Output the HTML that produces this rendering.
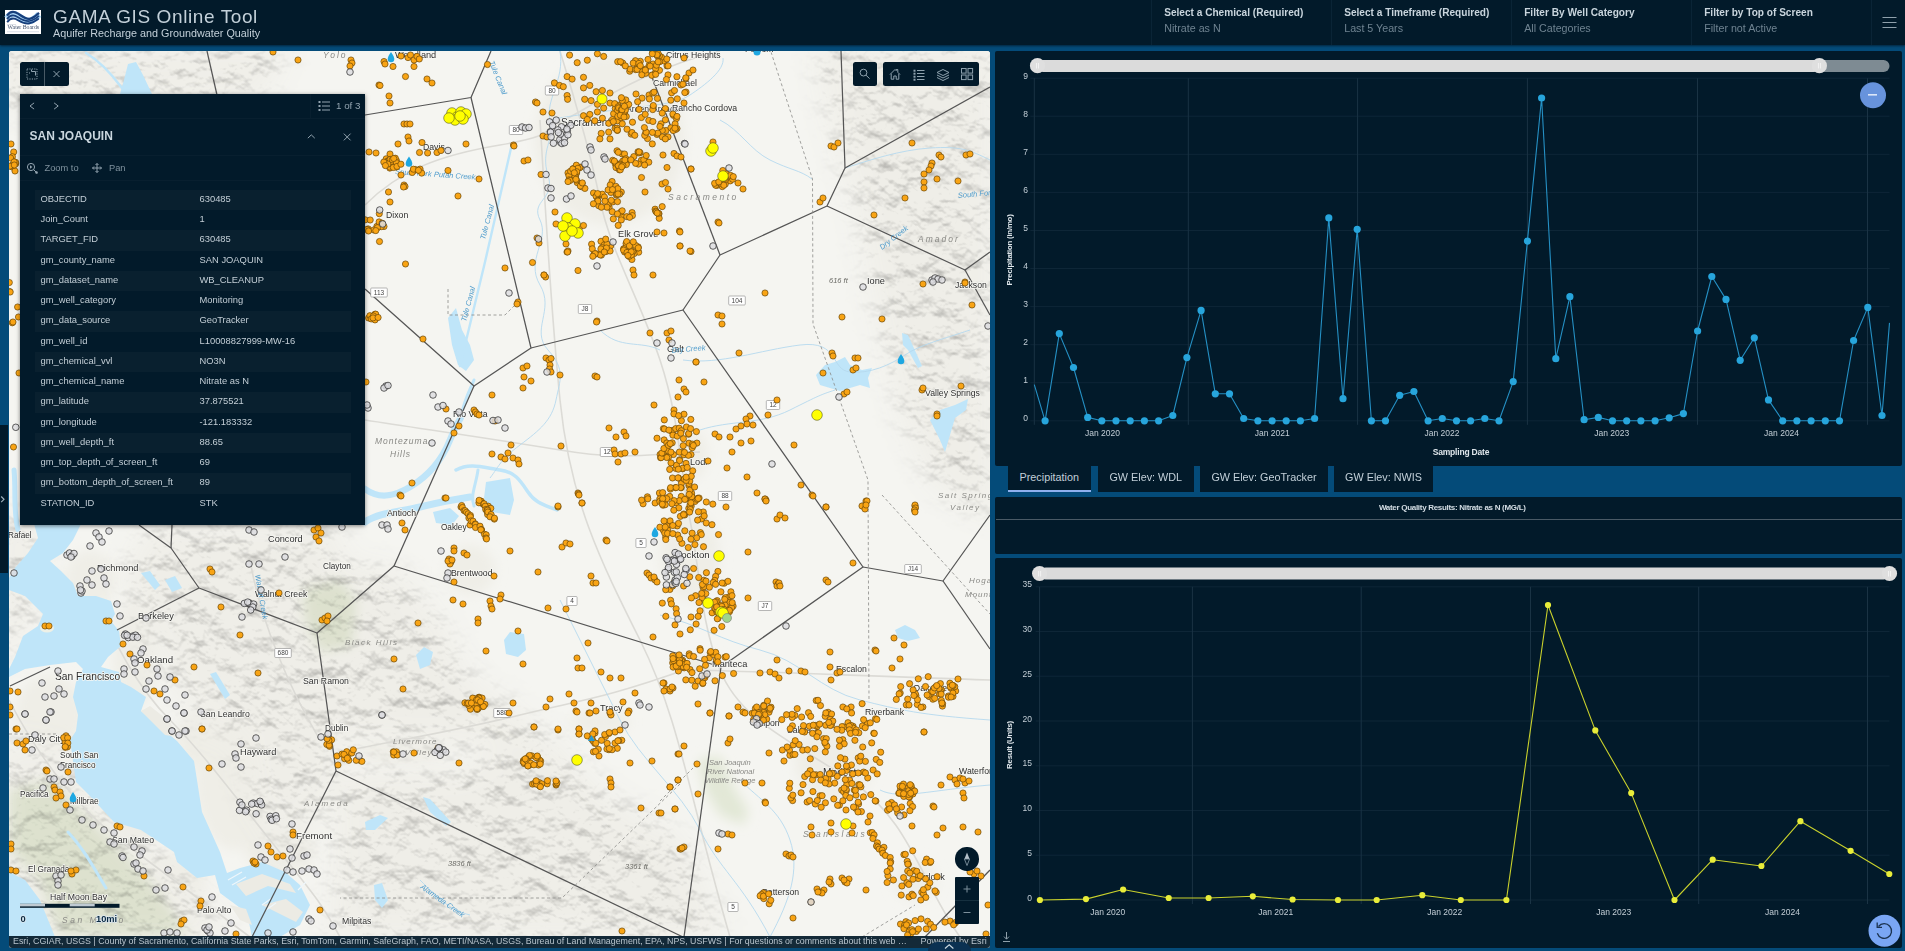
<!DOCTYPE html><html><head><meta charset="utf-8"><title>GAMA GIS Online Tool</title><style>
*{box-sizing:border-box;margin:0;padding:0}
html,body{width:1905px;height:951px;overflow:hidden;background:#044b79;font-family:"Liberation Sans",sans-serif;}
.abs{position:absolute}
#hdr{position:absolute;left:0;top:0;width:1905px;height:45px;background:#021a2a;box-shadow:0 1px 2px rgba(0,10,20,.6)}
#title{position:absolute;left:53px;top:4.5px;font-size:19px;letter-spacing:.6px;color:#c3d0d9;white-space:nowrap;line-height:24px}
#sub{position:absolute;left:53px;top:26px;font-size:10.8px;color:#c3d0d9;white-space:nowrap;line-height:14px}
.flt{position:absolute;top:0;height:45px;width:180px;border-left:1px solid #0a2436}
.flt b{position:absolute;left:12.2px;top:6px;font-size:10.1px;color:#c9d5dd;white-space:nowrap;line-height:13px}
.flt span{position:absolute;left:12.2px;top:22px;font-size:10.7px;color:#6f8391;white-space:nowrap;line-height:13px}
.panel{position:absolute;background:#021a2a;border-radius:2px}
.tab{position:absolute;top:466px;height:26px;background:#021a2a;color:#c3d0d9;font-size:10.8px;line-height:23px;text-align:center;white-space:nowrap}
#popup{position:absolute;left:20px;top:94px;width:345px;height:431px;background:#021a2a;box-shadow:0 1px 4px rgba(0,0,0,.5)}
#popup .row{position:absolute;left:15px;width:316px;height:20.25px;font-size:9.4px;color:#c3ced6;line-height:18.5px;white-space:nowrap}
#popup .row.o{background:#09202f}
#popup .row i{font-style:normal;position:absolute;left:5.5px}
#popup .row u{text-decoration:none;position:absolute;left:164.5px}
.mbtn{position:absolute;background:#021a2a;border-radius:2.5px}
svg{position:absolute;left:0;top:0;overflow:visible}
</style></head><body><div id="hdr"><svg width="46" height="46" viewBox="0 0 46 46"><rect x="5" y="10" width="36" height="24" fill="#fff"/>
<g fill="none" stroke-linecap="butt"><path d="M7.2 18.3C10 13.3 14 13 18 15.8S25.5 21.6 29.5 21S36 17.5 39 14.5" stroke="#a9d6f7" stroke-width="6.5"/>
<path d="M7 15.6C10 11.2 14 11 18 13.6S25.5 19.3 29.5 18.8S36 15.5 39 12.8" stroke="#173f7c" stroke-width="2.3"/>
<path d="M7 19.2C10 14.8 14 14.6 18 17.2S25.5 21.5 29.5 21S36 18.3 39 15.8" stroke="#173f7c" stroke-width="1.7"/>
<path d="M7.2 22.2C10 18 14 17.7 18 20.2S25.5 24 29.5 23.3S36 20.5 38.8 18.5" stroke="#173f7c" stroke-width="1.9"/></g>
<text x="7.6" y="29.3" font-size="5.8" font-family="Liberation Serif,serif" fill="#3c4d69" textLength="31.5" lengthAdjust="spacingAndGlyphs">Water Boards</text>
<rect x="7" y="31.4" width="32" height=".8" fill="#cfd6e2"/><rect x="7" y="24" width="9" height=".6" fill="#c5ccd8"/></svg><div id="title">GAMA GIS Online Tool</div><div id="sub">Aquifer Recharge and Groundwater Quality</div><div class="flt" style="left:1151px"><b>Select a Chemical (Required)</b><span>Nitrate as N</span></div><div class="flt" style="left:1331px"><b>Select a Timeframe (Required)</b><span>Last 5 Years</span></div><div class="flt" style="left:1511px"><b>Filter By Well Category</b><span>All Categories</span></div><div class="flt" style="left:1691px"><b>Filter by Top of Screen</b><span>Filter not Active</span></div><div class="flt" style="left:1871px;width:34px"></div><svg width="1905" height="46"><path d="M1882.5 17.5h14M1882.5 22.5h14M1882.5 27.5h14" stroke="#8fa0ab" stroke-width="1"/></svg></div><div class="abs" style="left:9px;top:51px;width:981px;height:896.5px;overflow:hidden;border-radius:3px;background:#f5f5f1"><svg width="981" height="896.5" viewBox="9 51 981 896.5" font-family="Liberation Sans, sans-serif"><defs><filter id="hs" x="0" y="0" width="100%" height="100%" color-interpolation-filters="sRGB"><feTurbulence type="fractalNoise" baseFrequency="0.04 0.05" numOctaves="4" seed="5" result="n"/><feDiffuseLighting in="n" surfaceScale="5.5" diffuseConstant="1.49" lighting-color="#fff"><feDistantLight azimuth="225" elevation="42"/></feDiffuseLighting></filter><filter id="bl" x="-20%" y="-20%" width="140%" height="140%"><feGaussianBlur stdDeviation="14"/></filter><filter id="bl2" x="-20%" y="-20%" width="140%" height="140%"><feGaussianBlur stdDeviation="6"/></filter><mask id="hm" maskUnits="userSpaceOnUse" x="9" y="51" width="981" height="897"><rect x="9" y="51" width="981" height="897" fill="#000"/><g filter="url(#bl)" fill="#fff"><polygon points="340,778 380,768 460,772 500,745 520,715 560,745 600,790 640,815 670,840 700,880 720,940 330,940 336,790" fill="#fff"/><polygon points="150,525 340,525 340,735 210,735 170,680 135,620 125,570" fill="#fff"/><polygon points="340,560 400,572 440,620 470,680 500,700 520,715 500,745 340,740" fill="#fff"/><polygon points="815,45 995,45 995,520 965,505 930,480 900,410 875,300 855,200 830,120" fill="#fff"/><polygon points="0,45 290,45 260,100 0,110" fill="#fff"/><polygon points="0,740 60,750 100,800 150,845 200,890 230,940 0,940" fill="#fff"/><polygon points="0,515 35,515 42,600 0,670" fill="#fff"/><polygon points="655,815 690,850 725,940 655,940" fill="#fff"/><polygon points="240,735 340,735 340,775 290,860 250,800" fill="#fff"/></g></mask></defs><rect x="9" y="51" width="981" height="897" fill="#f5f5f1"/><g fill="#efeee7" filter="url(#bl2)"><ellipse cx="610" cy="140" rx="75" ry="85"/><ellipse cx="690" cy="555" rx="30" ry="45"/><ellipse cx="835" cy="760" rx="40" ry="40"/><ellipse cx="135" cy="655" rx="22" ry="55"/><ellipse cx="50" cy="715" rx="35" ry="40"/><ellipse cx="235" cy="780" rx="40" ry="70"/><ellipse cx="200" cy="740" rx="25" ry="30"/><ellipse cx="120" cy="830" rx="40" ry="18"/><ellipse cx="90" cy="580" rx="25" ry="30"/><ellipse cx="280" cy="850" rx="35" ry="25"/><ellipse cx="170" cy="880" rx="35" ry="25"/><ellipse cx="690" cy="455" rx="18" ry="25"/><ellipse cx="915" cy="880" rx="22" ry="20"/><ellipse cx="600" cy="722" rx="30" ry="12"/><ellipse cx="400" cy="752" rx="45" ry="12"/><ellipse cx="700" cy="668" rx="25" ry="12"/><ellipse cx="470" cy="570" rx="25" ry="25"/></g><g mask="url(#hm)"><rect x="9" y="51" width="981" height="897" fill="#efeee8"/><g opacity=".24" style="mix-blend-mode:multiply"><rect x="-300" y="-300" width="1700" height="1700" filter="url(#hs)" transform="rotate(38 500 500)"/></g></g><g fill="#ecf2e3" filter="url(#bl2)" style="mix-blend-mode:multiply"><polygon points="9,790 50,780 100,830 150,880 190,936 60,936 40,880 9,850" fill="#ecf2e3"/><polygon points="303,588 340,580 356,600 352,646 320,651 305,620" fill="#ecf2e3"/><polygon points="698,760 720,756 735,790 748,810 744,825 720,815 705,790" fill="#ecf2e3"/></g><g fill="none" stroke="#dcdbd6" stroke-width="1.6"><path d="M560 51C575 100 590 150 600 200S640 300 660 360S680 470 690 520S700 620 720 670S790 740 850 780S920 880 960 937"/><path d="M365 205C400 170 440 155 500 145S540 130 560 122S640 70 720 51"/><path d="M540 120C545 200 550 300 560 400S600 560 640 640S690 800 730 937"/><path d="M100 600C110 640 140 690 170 720S230 790 270 840S320 900 340 937"/><path d="M340 752C400 740 460 730 520 715S600 700 690 668"/><path d="M9 700C40 760 80 810 120 840S200 900 250 937"/><path d="M250 560C260 620 290 690 320 740"/><path d="M365 420C430 430 500 440 560 450S640 455 700 452"/><path d="M690 670C780 672 860 676 990 680"/></g><polygon points="33,520 83,520 73,540 63,553 50,561 61,571 73,583 78,596 96,596 111,601 115,614 111,621 119,631 121,646 108,657 101,667 119,672 121,682 131,687 146,697 141,711 177,741 194,761 202,812 220,852 227,873 240,868 262,862 285,872 300,885 310,905 300,925 280,937 252,937 247,913 220,893 215,875 197,878 177,862 174,852 141,830 114,822 88,794 76,782 70,740 76,731 78,715 73,697 76,682 83,669 76,662 50,665 25,669 9,677 9,669 15,657 23,636 38,626 43,614 25,596 9,590 9,578 15,568 28,553 38,538" fill="#bfe5f9"/><ellipse cx="47" cy="628" rx="7" ry="4.5" fill="#eef0e6"/><polygon points="9,872 25,880 40,900 55,937 9,937" fill="#bfe5f9"/><polygon points="141,711 150,706 170,722 178,737 165,735" fill="#ecebe4"/><polygon points="236,884 262,874 290,884 296,893 268,886 246,896" fill="#ecebe4"/><polygon points="262,905 286,899 303,912 296,922 276,912" fill="#ecebe4"/><polygon points="230,905 246,909 252,925 240,920" fill="#ecebe4"/><polygon points="816,375 825,365 835,362 845,357 850,365 862,370 872,368 868,378 870,388 860,385 850,388 840,391 830,388 820,385" fill="#bfe5f9"/><polygon points="902,333 908,335 922,366 918,368 908,350 903,345" fill="#bfe5f9"/><polygon points="930,420 940,410 955,405 968,399 966,410 955,418 950,435 945,452 940,440 935,430" fill="#bfe5f9"/><polygon points="895,630 905,625 915,630 920,638 908,641 898,638" fill="#bfe5f9"/><polygon points="504,640 510,632 524,634 526,650 518,657 506,654" fill="#bfe5f9"/><polygon points="416,655 424,647 433,652 430,665 420,669" fill="#bfe5f9"/><polygon points="423,797 430,799 451,822 446,826 430,812" fill="#bfe5f9"/><polygon points="365,822 380,815 388,818 375,830 366,830" fill="#bfe5f9"/><polygon points="374,885 382,883 388,900 382,908 375,900" fill="#bfe5f9"/><polygon points="486,482 510,478 514,500 510,515 492,512 484,498" fill="#bfe5f9"/><polygon points="433,512 450,508 459,516 452,525 436,523" fill="#bfe5f9"/><polygon points="448,318 456,308 462,330 470,345 474,360 466,371 458,365 452,345" fill="#bfe5f9"/><polygon points="128,64 136,62 143,75 152,94 120,94 124,80" fill="#bfe5f9"/><polygon points="141,573 150,571 160,585 155,590" fill="#bfe5f9"/><polygon points="165,580 175,576 182,588 172,592" fill="#bfe5f9"/><polygon points="210,674 216,672 230,695 225,699" fill="#bfe5f9"/><g fill="none" stroke="#bfe5f9" stroke-linecap="round"><path d="M365 489C380 500 395 496 410 487S440 465 450 440S458 425 461 417" stroke-width="6.5"/><path d="M365 522C380 512 400 512 420 507S450 500 470 497" stroke-width="7"/><path d="M461 417C464 400 470 390 474 380" stroke-width="3"/><path d="M511.5 146L485 262L460 366" stroke-width="2.4"/><path d="M456 470C470 462 485 468 500 470S520 480 528 492S545 505 557 510" stroke-width="3.5"/><path d="M478 470C476 485 470 495 474 506" stroke-width="3"/><path d="M68 832C85 850 95 870 106 888" stroke-width="3"/><path d="M86 53C98 60 110 72 122 88" stroke-width="2.5"/><path d="M14 470C16 490 13 510 18 530" stroke-width="5"/></g><g fill="none" stroke="#b5d9ee" stroke-width=".9"><path d="M560 51C565 80 545 100 550 120S540 150 548 175S530 200 540 220S525 260 540 285S530 330 548 350S560 380 556 400S540 430 520 445S500 465 490 478"/><path d="M723 58C725 70 705 85 690 95S650 105 600 112S560 118 550 120"/><path d="M720 120C740 130 750 150 770 160S800 170 812 179"/><path d="M845 168C870 160 900 150 930 148S970 150 990 160"/><path d="M683 360C720 365 760 350 800 345S830 370 850 372S890 365 905 355S940 340 970 330"/><path d="M700 430C730 420 760 425 790 410S820 395 835 390"/><path d="M660 615C700 625 720 640 760 650S820 690 860 700S920 715 990 720"/><path d="M560 600C580 640 600 680 620 720S680 790 700 830S740 880 770 937"/><path d="M770 937C790 900 800 870 790 840S760 800 740 780"/><path d="M880 790C900 800 930 790 990 785"/><path d="M420 880C440 900 450 910 470 915"/><path d="M600 330C620 350 640 340 660 350"/></g><g stroke="#eef6fb" stroke-width="1.2"><path d="M228 880l14-8M232 885l14-8M262 905l10-7M266 910l10-7M298 890l8-8"/></g><g stroke="#5c5c5c" stroke-width="1.3" stroke-linejoin="round"><polyline points="207,51 217,95" fill="none" stroke="#555" stroke-width="1.25"/><polyline points="491,51 471,97.5 365,115" fill="none" stroke="#555" stroke-width="1.25"/><polyline points="471,97.5 531,348 474,386 365,289" fill="none" stroke="#555" stroke-width="1.25"/><polyline points="474,386 394,566 721,667" fill="none" stroke="#555" stroke-width="1.25"/><polyline points="394,566 317,633 199,588 171,548 139,525" fill="none" stroke="#555" stroke-width="1.25"/><polyline points="199,588 117,630" fill="none" stroke="#555" stroke-width="1.25"/><polyline points="172,525 171,548" fill="none" stroke="#555" stroke-width="1.25"/><polyline points="317,633 336,771 252,937" fill="none" stroke="#555" stroke-width="1.25"/><polyline points="336,771 683,937" fill="none" stroke="#555" stroke-width="1.25"/><polyline points="10,686 50,667" fill="none" stroke="#555" stroke-width="1.25"/><polyline points="721,667 863,567 683,310 720,255" fill="none" stroke="#555" stroke-width="1.25"/><polyline points="531,348 683,310" fill="none" stroke="#555" stroke-width="1.25"/><polyline points="720,255 827,206 845,168 841,51" fill="none" stroke="#555" stroke-width="1.25"/><polyline points="845,168 990,87" fill="none" stroke="#555" stroke-width="1.25"/><polyline points="827,206 965,270 990,252" fill="none" stroke="#555" stroke-width="1.25"/><polyline points="965,270 990,315" fill="none" stroke="#555" stroke-width="1.25"/><polyline points="720,255 650,72" fill="none" stroke="#555" stroke-width="1.25"/><polyline points="863,567 943,581 990,515" fill="none" stroke="#555" stroke-width="1.25"/><polyline points="943,581 990,649" fill="none" stroke="#555" stroke-width="1.25"/><polyline points="721,667 684,937" fill="none" stroke="#555" stroke-width="1.25"/><polyline points="990,870 925,937" fill="none" stroke="#555" stroke-width="1.25"/></g><g stroke-dasharray="3 2.5"><polyline points="771,52 812.5,179 813,324 868,480 869,700" fill="none" stroke="#8a8a88" stroke-width=".8"/><polyline points="882,495 990,614" fill="none" stroke="#8a8a88" stroke-width=".8"/><polyline points="660,801 693,768" fill="none" stroke="#8a8a88" stroke-width=".8"/><polyline points="680,784 562,898 340,898" fill="none" stroke="#8a8a88" stroke-width=".8"/><polyline points="9,734 58,734" fill="none" stroke="#8a8a88" stroke-width=".8"/><polyline points="862,937 915,905" fill="none" stroke="#8a8a88" stroke-width=".8"/><polyline points="448,289 448,315 505,315 518,302" fill="none" stroke="#8a8a88" stroke-width=".8"/></g><g fill="#2f2f2f" stroke="#f7f7f3" stroke-width="1.6" paint-order="stroke" stroke-linejoin="round"><text x="395" y="58" font-size="9.2">Woodland</text><text x="666" y="58" font-size="8.7">Citrus Heights</text><text x="561" y="126" font-size="10.2">Sacramento</text><text x="423" y="150" font-size="8.7">Davis</text><text x="626" y="112" font-size="8.7">Arden-Arcade</text><text x="653" y="86" font-size="8.7">Carmichael</text><text x="672" y="111" font-size="8.7">Rancho Cordova</text><text x="386" y="218" font-size="8.7">Dixon</text><text x="618" y="237" font-size="9.2">Elk Grove</text><text x="667" y="352" font-size="9.2">Galt</text><text x="867" y="284" font-size="9.2">Ione</text><text x="955" y="288" font-size="8.7">Jackson</text><text x="925" y="396" font-size="8.7">Valley Springs</text><text x="453" y="417" font-size="8.7">Rio Vista</text><text x="387" y="516" font-size="8.7">Antioch</text><text x="441" y="530" font-size="8.2">Oakley</text><text x="451" y="576" font-size="8.7">Brentwood</text><text x="268" y="542" font-size="9.2">Concord</text><text x="255" y="597" font-size="8.7">Walnut Creek</text><text x="323" y="569" font-size="8.2">Clayton</text><text x="97" y="571" font-size="9.2">Richmond</text><text x="138" y="619" font-size="9.2">Berkeley</text><text x="137" y="663" font-size="9.7">Oakland</text><text x="55" y="680" font-size="10.2">San Francisco</text><text x="303" y="684" font-size="8.7">San Ramon</text><text x="200" y="717" font-size="8.7">San Leandro</text><text x="240" y="755" font-size="9.2">Hayward</text><text x="28" y="742" font-size="9.2">Daly City</text><text x="60" y="758" font-size="8.2">South San</text><text x="60" y="768" font-size="8.2">Francisco</text><text x="20" y="797" font-size="8.2">Pacifica</text><text x="70" y="804" font-size="8.2">Millbrae</text><text x="112" y="843" font-size="8.7">San Mateo</text><text x="296" y="839" font-size="9.7">Fremont</text><text x="28" y="872" font-size="8.2">El Granada</text><text x="50" y="900" font-size="8.7">Half Moon Bay</text><text x="197" y="913" font-size="8.7">Palo Alto</text><text x="342" y="924" font-size="8.7">Milpitas</text><text x="8" y="538" font-size="8.2">Rafael</text><text x="325" y="731" font-size="8.2">Dublin</text><text x="600" y="711" font-size="9.2">Tracy</text><text x="672" y="558" font-size="9.7">Stockton</text><text x="712" y="667" font-size="9.2">Manteca</text><text x="836" y="672" font-size="8.7">Escalon</text><text x="913" y="691" font-size="9.2">Oakdale</text><text x="757" y="726" font-size="8.7">Ripon</text><text x="865" y="715" font-size="8.7">Riverbank</text><text x="787" y="733" font-size="8.7">Salida</text><text x="823" y="776" font-size="10.2">Modesto</text><text x="959" y="774" font-size="8.7">Waterford</text><text x="915" y="880" font-size="9.2">Turlock</text><text x="762" y="895" font-size="8.7">Patterson</text><text x="690" y="465" font-size="9.2">Lodi</text><text x="745" y="52" font-size="8.7">Folsom</text></g><g fill="#8a8a86" font-style="italic"><text x="323" y="58" font-size="8.5" letter-spacing="2">Yolo</text><text x="918" y="242" font-size="8.5" letter-spacing="2">Amador</text><text x="668" y="200" font-size="8.5" letter-spacing="2.5">Sacramento</text><text x="375" y="444" font-size="8.5" letter-spacing="1">Montezuma</text><text x="390" y="457" font-size="8.5" letter-spacing="1">Hills</text><text x="345" y="645" font-size="8" letter-spacing="1.5">Black Hills</text><text x="803" y="837" font-size="8.5" letter-spacing="2.5">Stanislaus</text><text x="393" y="744" font-size="8" letter-spacing="1">Livermore</text><text x="405" y="755" font-size="8" letter-spacing="1">Valley</text><text x="62" y="923" font-size="8.5" letter-spacing="2.5">San Mateo</text><text x="304" y="806" font-size="8" letter-spacing="2">Alameda</text><text x="938" y="498" font-size="8" letter-spacing="1.5">Salt Spring</text><text x="950" y="510" font-size="8" letter-spacing="1.5">Valley</text><text x="969" y="583" font-size="8" letter-spacing="1">Hogan</text><text x="965" y="597" font-size="8" letter-spacing="1">Mountain</text><text x="709" y="765" font-size="7.5" letter-spacing="0">San Joaquin</text><text x="707" y="774" font-size="7.5" letter-spacing="0">River National</text><text x="705" y="783" font-size="7.5" letter-spacing="0">Wildlife Refuge</text></g><g fill="#6b6b66" font-style="italic" font-size="7.5"><text x="448" y="866">3836 ft</text><text x="625" y="869">3361 ft</text><text x="829" y="283">616 ft</text></g><g fill="#4f9ccc" font-style="italic" font-size="7.5"><text transform="translate(420 888) rotate(35)">Alameda Creek</text><text transform="translate(489 62) rotate(68)">Tule Canal</text><text transform="translate(485 240) rotate(-75)">Tule Canal</text><text transform="translate(466 322) rotate(-75)">Tule Canal</text><text transform="translate(395 174) rotate(4)">South Fork Putah Creek</text><text transform="translate(882 250) rotate(-38)">Dry Creek</text><text transform="translate(958 198) rotate(-5)">South Fork</text><text transform="translate(672 353) rotate(-5)">Dry Creek</text><text transform="translate(255 575) rotate(80)">Walnut Creek</text></g><g font-size="6.5" fill="#444" text-anchor="middle"><rect x="370.7" y="288" width="16.6" height="9" rx="1" fill="#fff" stroke="#888" stroke-width=".6"/><text x="379" y="294.9">113</text><rect x="578.3" y="304.5" width="13.4" height="9" rx="1" fill="#fff" stroke="#888" stroke-width=".6"/><text x="585" y="311.4">J8</text><rect x="728.7" y="296" width="16.6" height="9" rx="1" fill="#fff" stroke="#888" stroke-width=".6"/><text x="737" y="302.9">104</text><rect x="766.3" y="400.5" width="13.4" height="9" rx="1" fill="#fff" stroke="#888" stroke-width=".6"/><text x="773" y="407.4">12</text><rect x="600.3" y="447.5" width="13.4" height="9" rx="1" fill="#fff" stroke="#888" stroke-width=".6"/><text x="607" y="454.4">12</text><rect x="718.3" y="491.5" width="13.4" height="9" rx="1" fill="#fff" stroke="#888" stroke-width=".6"/><text x="725" y="498.4">88</text><rect x="758.3" y="601.5" width="13.4" height="9" rx="1" fill="#fff" stroke="#888" stroke-width=".6"/><text x="765" y="608.4">J7</text><rect x="904.7" y="564.5" width="16.6" height="9" rx="1" fill="#fff" stroke="#888" stroke-width=".6"/><text x="913" y="571.4">J14</text><rect x="566.9" y="596.5" width="10.2" height="9" rx="1" fill="#fff" stroke="#888" stroke-width=".6"/><text x="572" y="603.4">4</text><rect x="545.3" y="86" width="13.4" height="9" rx="1" fill="#fff" stroke="#888" stroke-width=".6"/><text x="552" y="92.9">80</text><rect x="509.3" y="125.5" width="13.4" height="9" rx="1" fill="#fff" stroke="#888" stroke-width=".6"/><text x="516" y="132.4">80</text><rect x="274.7" y="648.5" width="16.6" height="9" rx="1" fill="#fff" stroke="#888" stroke-width=".6"/><text x="283" y="655.4">680</text><rect x="635.9" y="538.5" width="10.2" height="9" rx="1" fill="#fff" stroke="#888" stroke-width=".6"/><text x="641" y="545.4">5</text><rect x="493.7" y="708.5" width="16.6" height="9" rx="1" fill="#fff" stroke="#888" stroke-width=".6"/><text x="502" y="715.4">580</text><rect x="727.9" y="902.5" width="10.2" height="9" rx="1" fill="#fff" stroke="#888" stroke-width=".6"/><text x="733" y="909.4">5</text></g><g fill="#f9a414" stroke="#6a4708" stroke-width=".7"><circle cx="298" cy="60" r="3.1"/><circle cx="351" cy="60" r="3.1"/><circle cx="379" cy="85" r="3.1"/><circle cx="389" cy="96" r="3.1"/><circle cx="390" cy="103" r="3.1"/><circle cx="273" cy="52" r="3.1"/><circle cx="11" cy="144" r="3.1"/><circle cx="13.7" cy="152" r="3.1"/><circle cx="12.3" cy="167" r="3.1"/><circle cx="15" cy="171" r="3.1"/><circle cx="12.3" cy="322.8" r="3.1"/><circle cx="13.5" cy="447" r="3.1"/><circle cx="9.5" cy="291.5" r="3.1"/><circle cx="12.3" cy="165.2" r="3.1"/><circle cx="12.4" cy="156.7" r="3.1"/><circle cx="10.6" cy="158" r="3.1"/><circle cx="15.7" cy="163.8" r="3.1"/><circle cx="15.6" cy="162.3" r="3.1"/><circle cx="14.1" cy="161.9" r="3.1"/><circle cx="9.8" cy="166.2" r="3.1"/><circle cx="14.3" cy="165" r="3.1"/><circle cx="352" cy="63" r="3.1"/><circle cx="350" cy="66" r="3.1"/><circle cx="9.3" cy="282.5" r="3.1"/><circle cx="10.2" cy="292" r="3.1"/><circle cx="17.6" cy="307" r="3.1"/><circle cx="13" cy="322" r="3.1"/><circle cx="18.5" cy="317" r="3.1"/><circle cx="19" cy="373" r="3.1"/><circle cx="401" cy="56" r="3.1"/><circle cx="408" cy="57.6" r="3.1"/><circle cx="410.5" cy="55" r="3.1"/><circle cx="414" cy="60" r="3.1"/><circle cx="417" cy="56.4" r="3.1"/><circle cx="419.3" cy="59" r="3.1"/><circle cx="384" cy="61.5" r="3.1"/><circle cx="385" cy="64" r="3.1"/><circle cx="393" cy="66.5" r="3.1"/><circle cx="414" cy="66.5" r="3.1"/><circle cx="405.5" cy="76.5" r="3.1"/><circle cx="427" cy="79" r="3.1"/><circle cx="432" cy="83" r="3.1"/><circle cx="380" cy="85.5" r="3.1"/><circle cx="404" cy="124" r="3.1"/><circle cx="407" cy="124" r="3.1"/><circle cx="410" cy="124" r="3.1"/><circle cx="487.5" cy="64.5" r="3.1"/><circle cx="466" cy="144" r="3.1"/><circle cx="479" cy="179" r="3.1"/><circle cx="458" cy="196" r="3.1"/><circle cx="448" cy="170.5" r="3.1"/><circle cx="405.5" cy="264" r="3.1"/><circle cx="419.5" cy="152.5" r="3.1"/><circle cx="422" cy="142.5" r="3.1"/><circle cx="427.6" cy="153" r="3.1"/><circle cx="437" cy="152.5" r="3.1"/><circle cx="441" cy="150.5" r="3.1"/><circle cx="408" cy="137" r="3.1"/><circle cx="409" cy="141" r="3.1"/><circle cx="398" cy="144" r="3.1"/><circle cx="369" cy="152" r="3.1"/><circle cx="376" cy="153" r="3.1"/><circle cx="390" cy="154" r="3.1"/><circle cx="401" cy="175" r="3.1"/><circle cx="404" cy="185" r="3.1"/><circle cx="405" cy="186.5" r="3.1"/><circle cx="403.5" cy="187" r="3.1"/><circle cx="388.5" cy="192" r="3.1"/><circle cx="390" cy="202" r="3.1"/><circle cx="379.5" cy="241.5" r="3.1"/><circle cx="535.5" cy="102" r="3.1"/><circle cx="537" cy="103" r="3.1"/><circle cx="543" cy="112" r="3.1"/><circle cx="552" cy="113" r="3.1"/><circle cx="513.5" cy="145" r="3.1"/><circle cx="514" cy="146" r="3.1"/><circle cx="524" cy="161" r="3.1"/><circle cx="528" cy="160" r="3.1"/><circle cx="543" cy="136" r="3.1"/><circle cx="547" cy="137" r="3.1"/><circle cx="541" cy="174.5" r="3.1"/><circle cx="663" cy="155" r="3.1"/><circle cx="674" cy="153.5" r="3.1"/><circle cx="677" cy="156" r="3.1"/><circle cx="681" cy="157" r="3.1"/><circle cx="667" cy="167.5" r="3.1"/><circle cx="691" cy="169" r="3.1"/><circle cx="662" cy="184" r="3.1"/><circle cx="665.5" cy="182.5" r="3.1"/><circle cx="668" cy="189" r="3.1"/><circle cx="645" cy="192" r="3.1"/><circle cx="641.5" cy="177.5" r="3.1"/><circle cx="657" cy="232" r="3.1"/><circle cx="664" cy="233" r="3.1"/><circle cx="679.5" cy="231" r="3.1"/><circle cx="680" cy="246" r="3.1"/><circle cx="691" cy="251.5" r="3.1"/><circle cx="653" cy="275" r="3.1"/><circle cx="537" cy="238" r="3.1"/><circle cx="539" cy="243" r="3.1"/><circle cx="532.5" cy="262.5" r="3.1"/><circle cx="505" cy="268" r="3.1"/><circle cx="544" cy="275" r="3.1"/><circle cx="545.6" cy="277" r="3.1"/><circle cx="578" cy="270.5" r="3.1"/><circle cx="567" cy="252" r="3.1"/><circle cx="568" cy="251" r="3.1"/><circle cx="555" cy="212" r="3.1"/><circle cx="556" cy="224" r="3.1"/><circle cx="566" cy="244" r="3.1"/><circle cx="567.5" cy="252" r="3.1"/><circle cx="580" cy="227" r="3.1"/><circle cx="583.5" cy="225.5" r="3.1"/><circle cx="633" cy="270" r="3.1"/><circle cx="634" cy="275" r="3.1"/><circle cx="684" cy="58" r="3.1"/><circle cx="689" cy="73" r="3.1"/><circle cx="693" cy="70" r="3.1"/><circle cx="681" cy="85" r="3.1"/><circle cx="686" cy="92" r="3.1"/><circle cx="684" cy="103" r="3.1"/><circle cx="386.2" cy="158.8" r="3.1"/><circle cx="387.4" cy="161.2" r="3.1"/><circle cx="395.1" cy="162.8" r="3.1"/><circle cx="396.4" cy="160.5" r="3.1"/><circle cx="395.1" cy="164.6" r="3.1"/><circle cx="389.8" cy="168.1" r="3.1"/><circle cx="396.2" cy="167.1" r="3.1"/><circle cx="389.1" cy="160.2" r="3.1"/><circle cx="390.6" cy="162.6" r="3.1"/><circle cx="397.2" cy="164" r="3.1"/><circle cx="390.2" cy="159.4" r="3.1"/><circle cx="390" cy="167.2" r="3.1"/><circle cx="387.8" cy="164" r="3.1"/><circle cx="395.3" cy="158.2" r="3.1"/><circle cx="393.3" cy="167.5" r="3.1"/><circle cx="383.8" cy="162.1" r="3.1"/><circle cx="392.3" cy="159.8" r="3.1"/><circle cx="396.4" cy="162.7" r="3.1"/><circle cx="385.4" cy="165.6" r="3.1"/><circle cx="397" cy="166.4" r="3.1"/><circle cx="400.9" cy="164.2" r="3.1"/><circle cx="393.7" cy="158.5" r="3.1"/><circle cx="419.4" cy="170.6" r="3.1"/><circle cx="415.4" cy="169.5" r="3.1"/><circle cx="413.4" cy="170.9" r="3.1"/><circle cx="420.1" cy="169.1" r="3.1"/><circle cx="412.2" cy="172.5" r="3.1"/><circle cx="421.7" cy="173.1" r="3.1"/><circle cx="413.4" cy="169.2" r="3.1"/><circle cx="418.4" cy="170.3" r="3.1"/><circle cx="368.2" cy="228.9" r="3.1"/><circle cx="382.4" cy="224.1" r="3.1"/><circle cx="376.9" cy="226.3" r="3.1"/><circle cx="384" cy="226.5" r="3.1"/><circle cx="378.8" cy="227" r="3.1"/><circle cx="367" cy="229.5" r="3.1"/><circle cx="381.4" cy="226.6" r="3.1"/><circle cx="365.2" cy="219.8" r="3.1"/><circle cx="379.3" cy="213.7" r="3.1"/><circle cx="373.7" cy="230" r="3.1"/><circle cx="368.5" cy="231" r="3.1"/><circle cx="379.1" cy="221.9" r="3.1"/><circle cx="377.4" cy="227.7" r="3.1"/><circle cx="375.8" cy="230.6" r="3.1"/><circle cx="370.2" cy="220" r="3.1"/><circle cx="382.1" cy="223.2" r="3.1"/><circle cx="569.6" cy="55.1" r="3.1"/><circle cx="577.2" cy="62.7" r="3.1"/><circle cx="587.3" cy="60.2" r="3.1"/><circle cx="597.4" cy="53.8" r="3.1"/><circle cx="603.7" cy="56.4" r="3.1"/><circle cx="567.1" cy="76.6" r="3.1"/><circle cx="572.1" cy="79.1" r="3.1"/><circle cx="583.5" cy="77.3" r="3.1"/><circle cx="554.4" cy="82.9" r="3.1"/><circle cx="559.5" cy="85.4" r="3.1"/><circle cx="563.3" cy="86.7" r="3.1"/><circle cx="567.1" cy="95.5" r="3.1"/><circle cx="567.6" cy="99.3" r="3.1"/><circle cx="583.5" cy="87.9" r="3.1"/><circle cx="589.8" cy="85.4" r="3.1"/><circle cx="596.1" cy="91.7" r="3.1"/><circle cx="602.4" cy="90.5" r="3.1"/><circle cx="610" cy="93" r="3.1"/><circle cx="584.7" cy="99.3" r="3.1"/><circle cx="591.1" cy="100.6" r="3.1"/><circle cx="597.4" cy="104.3" r="3.1"/><circle cx="603.7" cy="108.1" r="3.1"/><circle cx="610" cy="103.1" r="3.1"/><circle cx="597.4" cy="111.9" r="3.1"/><circle cx="589.8" cy="114.4" r="3.1"/><circle cx="583.5" cy="115.7" r="3.1"/><circle cx="587.3" cy="119.5" r="3.1"/><circle cx="594.8" cy="120.8" r="3.1"/><circle cx="602.4" cy="118.2" r="3.1"/><circle cx="608.7" cy="123.3" r="3.1"/><circle cx="612.5" cy="119.5" r="3.1"/><circle cx="601.2" cy="133.4" r="3.1"/><circle cx="608.7" cy="132.1" r="3.1"/><circle cx="599.9" cy="138.9" r="3.1"/><circle cx="610" cy="138.9" r="3.1"/><circle cx="615.1" cy="128.3" r="3.1"/><circle cx="617.6" cy="120.8" r="3.1"/><circle cx="629.7" cy="71.2" r="3.1"/><circle cx="663.7" cy="60.9" r="3.1"/><circle cx="622.7" cy="63" r="3.1"/><circle cx="640.3" cy="61.3" r="3.1"/><circle cx="661.5" cy="57.2" r="3.1"/><circle cx="659.4" cy="55.8" r="3.1"/><circle cx="630.2" cy="69.1" r="3.1"/><circle cx="659.5" cy="70.3" r="3.1"/><circle cx="649.2" cy="65.3" r="3.1"/><circle cx="645.7" cy="69.1" r="3.1"/><circle cx="639.8" cy="66.5" r="3.1"/><circle cx="653.1" cy="64" r="3.1"/><circle cx="655.6" cy="68.7" r="3.1"/><circle cx="667" cy="65.9" r="3.1"/><circle cx="635.4" cy="60.7" r="3.1"/><circle cx="642.8" cy="71.7" r="3.1"/><circle cx="637" cy="67.4" r="3.1"/><circle cx="658.1" cy="53.5" r="3.1"/><circle cx="625.3" cy="65.9" r="3.1"/><circle cx="650.1" cy="66.1" r="3.1"/><circle cx="635.6" cy="69.6" r="3.1"/><circle cx="648" cy="59.4" r="3.1"/><circle cx="668.1" cy="65.8" r="3.1"/><circle cx="633.2" cy="63.1" r="3.1"/><circle cx="638.9" cy="63.4" r="3.1"/><circle cx="617.7" cy="61.7" r="3.1"/><circle cx="657.2" cy="55.8" r="3.1"/><circle cx="641.9" cy="71.9" r="3.1"/><circle cx="654.4" cy="73.9" r="3.1"/><circle cx="620.5" cy="61.7" r="3.1"/><circle cx="637.1" cy="69.4" r="3.1"/><circle cx="652.7" cy="52" r="3.1"/><circle cx="657" cy="54.7" r="3.1"/><circle cx="652.3" cy="53.8" r="3.1"/><circle cx="645.7" cy="73.3" r="3.1"/><circle cx="640.3" cy="65.7" r="3.1"/><circle cx="656.5" cy="65.2" r="3.1"/><circle cx="641.8" cy="74.8" r="3.1"/><circle cx="659.7" cy="61.7" r="3.1"/><circle cx="666.8" cy="59" r="3.1"/><circle cx="658.1" cy="61.8" r="3.1"/><circle cx="645.3" cy="70.1" r="3.1"/><circle cx="671.6" cy="92.8" r="3.1"/><circle cx="651.8" cy="75.3" r="3.1"/><circle cx="676.9" cy="76.7" r="3.1"/><circle cx="655.7" cy="74.3" r="3.1"/><circle cx="684.8" cy="92.6" r="3.1"/><circle cx="685.9" cy="78.4" r="3.1"/><circle cx="668" cy="74.9" r="3.1"/><circle cx="677.3" cy="98.8" r="3.1"/><circle cx="657.4" cy="98.4" r="3.1"/><circle cx="682.9" cy="84.2" r="3.1"/><circle cx="649" cy="95" r="3.1"/><circle cx="666.4" cy="79.5" r="3.1"/><circle cx="674.5" cy="90.5" r="3.1"/><circle cx="685.8" cy="77.9" r="3.1"/><circle cx="664.8" cy="137.5" r="3.1"/><circle cx="673.4" cy="115.3" r="3.1"/><circle cx="631.1" cy="134.1" r="3.1"/><circle cx="648.8" cy="120.4" r="3.1"/><circle cx="672.9" cy="114" r="3.1"/><circle cx="613.6" cy="113.7" r="3.1"/><circle cx="617" cy="128.2" r="3.1"/><circle cx="653.2" cy="107" r="3.1"/><circle cx="645.8" cy="132.6" r="3.1"/><circle cx="647.5" cy="138.6" r="3.1"/><circle cx="644.7" cy="135.4" r="3.1"/><circle cx="668" cy="136.9" r="3.1"/><circle cx="632" cy="132.5" r="3.1"/><circle cx="618" cy="105.2" r="3.1"/><circle cx="617.4" cy="130.4" r="3.1"/><circle cx="621.2" cy="117.8" r="3.1"/><circle cx="641.4" cy="117.5" r="3.1"/><circle cx="632.5" cy="122.2" r="3.1"/><circle cx="676.4" cy="118.6" r="3.1"/><circle cx="657" cy="134.4" r="3.1"/><circle cx="642.1" cy="98.1" r="3.1"/><circle cx="634.8" cy="135.3" r="3.1"/><circle cx="617.7" cy="109.8" r="3.1"/><circle cx="666" cy="130.5" r="3.1"/><circle cx="646.2" cy="132.2" r="3.1"/><circle cx="649.4" cy="98.9" r="3.1"/><circle cx="618.6" cy="109.1" r="3.1"/><circle cx="665.3" cy="108.6" r="3.1"/><circle cx="627.6" cy="105.5" r="3.1"/><circle cx="617.8" cy="116.3" r="3.1"/><circle cx="622.3" cy="123.8" r="3.1"/><circle cx="613.3" cy="121.6" r="3.1"/><circle cx="636" cy="94" r="3.1"/><circle cx="662.2" cy="113.1" r="3.1"/><circle cx="615.3" cy="108.4" r="3.1"/><circle cx="652.7" cy="109.6" r="3.1"/><circle cx="662.3" cy="130.4" r="3.1"/><circle cx="661" cy="123.8" r="3.1"/><circle cx="670.9" cy="127.8" r="3.1"/><circle cx="652.8" cy="93" r="3.1"/><circle cx="662.3" cy="136.9" r="3.1"/><circle cx="639.1" cy="109.4" r="3.1"/><circle cx="670.8" cy="100.2" r="3.1"/><circle cx="652.3" cy="143.9" r="3.1"/><circle cx="627" cy="129.2" r="3.1"/><circle cx="677" cy="116.4" r="3.1"/><circle cx="657.8" cy="133.1" r="3.1"/><circle cx="626.3" cy="116.5" r="3.1"/><circle cx="652.4" cy="132.4" r="3.1"/><circle cx="645.2" cy="114.3" r="3.1"/><circle cx="624.7" cy="112" r="3.1"/><circle cx="665.4" cy="119.8" r="3.1"/><circle cx="628.7" cy="104.4" r="3.1"/><circle cx="677" cy="128.5" r="3.1"/><circle cx="654" cy="92.2" r="3.1"/><circle cx="659.9" cy="126.5" r="3.1"/><circle cx="675.1" cy="123.9" r="3.1"/><circle cx="644.4" cy="127.6" r="3.1"/><circle cx="617.3" cy="130.1" r="3.1"/><circle cx="653.3" cy="105.5" r="3.1"/><circle cx="665.3" cy="138.9" r="3.1"/><circle cx="620.3" cy="108.3" r="3.1"/><circle cx="652.9" cy="121.5" r="3.1"/><circle cx="637.6" cy="101.7" r="3.1"/><circle cx="675.6" cy="129.5" r="3.1"/><circle cx="625.8" cy="99.9" r="3.1"/><circle cx="673.2" cy="130.5" r="3.1"/><circle cx="674.9" cy="128.2" r="3.1"/><circle cx="617.5" cy="110.3" r="3.1"/><circle cx="614.7" cy="103.6" r="3.1"/><circle cx="621.7" cy="113" r="3.1"/><circle cx="618.1" cy="106.8" r="3.1"/><circle cx="624.5" cy="111.6" r="3.1"/><circle cx="625.4" cy="110" r="3.1"/><circle cx="620.3" cy="115.2" r="3.1"/><circle cx="622.3" cy="100.5" r="3.1"/><circle cx="618.6" cy="108" r="3.1"/><circle cx="621.4" cy="109.5" r="3.1"/><circle cx="622" cy="109.7" r="3.1"/><circle cx="621.4" cy="97.7" r="3.1"/><circle cx="624" cy="117" r="3.1"/><circle cx="624.4" cy="106.2" r="3.1"/><circle cx="622.2" cy="154" r="3.1"/><circle cx="612.7" cy="160.3" r="3.1"/><circle cx="615.5" cy="164.4" r="3.1"/><circle cx="617" cy="150.8" r="3.1"/><circle cx="616" cy="167.6" r="3.1"/><circle cx="618.3" cy="152.3" r="3.1"/><circle cx="616.1" cy="163.3" r="3.1"/><circle cx="622.7" cy="161.2" r="3.1"/><circle cx="626.2" cy="163.7" r="3.1"/><circle cx="619.9" cy="164" r="3.1"/><circle cx="626.3" cy="164.6" r="3.1"/><circle cx="624.5" cy="154" r="3.1"/><circle cx="619.2" cy="164.8" r="3.1"/><circle cx="618.6" cy="166.5" r="3.1"/><circle cx="622.9" cy="165.6" r="3.1"/><circle cx="619.3" cy="169.8" r="3.1"/><circle cx="625.8" cy="158.7" r="3.1"/><circle cx="620.3" cy="169.8" r="3.1"/><circle cx="618.3" cy="165.6" r="3.1"/><circle cx="624.9" cy="160" r="3.1"/><circle cx="614.4" cy="161.1" r="3.1"/><circle cx="621.7" cy="166.8" r="3.1"/><circle cx="645.1" cy="160.1" r="3.1"/><circle cx="645.3" cy="163" r="3.1"/><circle cx="641.4" cy="160.3" r="3.1"/><circle cx="638.4" cy="164.1" r="3.1"/><circle cx="633.8" cy="156.6" r="3.1"/><circle cx="640" cy="152.7" r="3.1"/><circle cx="638" cy="151.8" r="3.1"/><circle cx="635.6" cy="163.3" r="3.1"/><circle cx="643.8" cy="159.7" r="3.1"/><circle cx="638.7" cy="152.9" r="3.1"/><circle cx="648.8" cy="162.2" r="3.1"/><circle cx="646.2" cy="155.5" r="3.1"/><circle cx="639.1" cy="151.9" r="3.1"/><circle cx="644.6" cy="165" r="3.1"/><circle cx="630.9" cy="159.8" r="3.1"/><circle cx="580.4" cy="167.2" r="3.1"/><circle cx="568" cy="172.9" r="3.1"/><circle cx="573.3" cy="168.6" r="3.1"/><circle cx="577.2" cy="182.6" r="3.1"/><circle cx="581.4" cy="186.7" r="3.1"/><circle cx="584.9" cy="188.4" r="3.1"/><circle cx="568.9" cy="175.7" r="3.1"/><circle cx="570.6" cy="171.2" r="3.1"/><circle cx="576.4" cy="180.1" r="3.1"/><circle cx="579.8" cy="167.6" r="3.1"/><circle cx="569" cy="179.8" r="3.1"/><circle cx="575.5" cy="176.8" r="3.1"/><circle cx="576.5" cy="172.5" r="3.1"/><circle cx="582.1" cy="183.5" r="3.1"/><circle cx="576.4" cy="173.3" r="3.1"/><circle cx="576.3" cy="165.2" r="3.1"/><circle cx="570.2" cy="180.4" r="3.1"/><circle cx="568" cy="181.6" r="3.1"/><circle cx="577.9" cy="168.3" r="3.1"/><circle cx="575.1" cy="176.7" r="3.1"/><circle cx="580.3" cy="186" r="3.1"/><circle cx="576.7" cy="171.7" r="3.1"/><circle cx="575.9" cy="179.3" r="3.1"/><circle cx="582.3" cy="182.9" r="3.1"/><circle cx="572.7" cy="169" r="3.1"/><circle cx="574.3" cy="172.8" r="3.1"/><circle cx="593.5" cy="193" r="3.1"/><circle cx="599.3" cy="195" r="3.1"/><circle cx="611" cy="190.1" r="3.1"/><circle cx="621.3" cy="192.1" r="3.1"/><circle cx="616.4" cy="195" r="3.1"/><circle cx="612.1" cy="181.5" r="3.1"/><circle cx="596.6" cy="196.3" r="3.1"/><circle cx="609.1" cy="207.2" r="3.1"/><circle cx="608.2" cy="204.4" r="3.1"/><circle cx="612.7" cy="201.9" r="3.1"/><circle cx="610.9" cy="192.5" r="3.1"/><circle cx="610.2" cy="185" r="3.1"/><circle cx="615.8" cy="186.3" r="3.1"/><circle cx="606.9" cy="207.2" r="3.1"/><circle cx="602.3" cy="194.2" r="3.1"/><circle cx="616.9" cy="194.2" r="3.1"/><circle cx="596.1" cy="196.3" r="3.1"/><circle cx="611.3" cy="200.3" r="3.1"/><circle cx="598.7" cy="205.7" r="3.1"/><circle cx="619.7" cy="194.1" r="3.1"/><circle cx="608.1" cy="189.9" r="3.1"/><circle cx="617.8" cy="188.7" r="3.1"/><circle cx="612.5" cy="189.6" r="3.1"/><circle cx="597.6" cy="200.3" r="3.1"/><circle cx="618" cy="193.9" r="3.1"/><circle cx="597.9" cy="201" r="3.1"/><circle cx="604.4" cy="197" r="3.1"/><circle cx="617.5" cy="201.6" r="3.1"/><circle cx="601.4" cy="207.2" r="3.1"/><circle cx="605" cy="201.2" r="3.1"/><circle cx="597.6" cy="193.6" r="3.1"/><circle cx="593.4" cy="203.8" r="3.1"/><circle cx="632.1" cy="212.6" r="3.1"/><circle cx="612.2" cy="211.7" r="3.1"/><circle cx="632.4" cy="215.6" r="3.1"/><circle cx="621.4" cy="216" r="3.1"/><circle cx="620.9" cy="212" r="3.1"/><circle cx="622.2" cy="210.8" r="3.1"/><circle cx="621.3" cy="219.9" r="3.1"/><circle cx="626.8" cy="216.6" r="3.1"/><circle cx="613.3" cy="218.9" r="3.1"/><circle cx="618.2" cy="225.4" r="3.1"/><circle cx="629.6" cy="217.3" r="3.1"/><circle cx="617.4" cy="213.9" r="3.1"/><circle cx="655.1" cy="209.2" r="3.1"/><circle cx="659" cy="213.8" r="3.1"/><circle cx="659.2" cy="218.3" r="3.1"/><circle cx="655.7" cy="211.1" r="3.1"/><circle cx="662.2" cy="206.6" r="3.1"/><circle cx="656.2" cy="211.9" r="3.1"/><circle cx="658.5" cy="213.3" r="3.1"/><circle cx="657.2" cy="213" r="3.1"/><circle cx="601.4" cy="255.1" r="3.1"/><circle cx="591.6" cy="244.2" r="3.1"/><circle cx="601" cy="241.3" r="3.1"/><circle cx="594.2" cy="253.5" r="3.1"/><circle cx="596.4" cy="253.9" r="3.1"/><circle cx="606.4" cy="251.4" r="3.1"/><circle cx="604.8" cy="248.1" r="3.1"/><circle cx="592.3" cy="248.8" r="3.1"/><circle cx="604.3" cy="244.8" r="3.1"/><circle cx="600.3" cy="254.9" r="3.1"/><circle cx="595.1" cy="253.7" r="3.1"/><circle cx="610.7" cy="245.8" r="3.1"/><circle cx="602.1" cy="247.7" r="3.1"/><circle cx="610.1" cy="251" r="3.1"/><circle cx="607" cy="244" r="3.1"/><circle cx="600.9" cy="248.9" r="3.1"/><circle cx="592.8" cy="256.3" r="3.1"/><circle cx="605.7" cy="239.1" r="3.1"/><circle cx="606.4" cy="248" r="3.1"/><circle cx="604.3" cy="252" r="3.1"/><circle cx="623.6" cy="248.8" r="3.1"/><circle cx="638.1" cy="246.9" r="3.1"/><circle cx="626.3" cy="243" r="3.1"/><circle cx="624.6" cy="252" r="3.1"/><circle cx="638.7" cy="252.2" r="3.1"/><circle cx="631.9" cy="259.5" r="3.1"/><circle cx="628" cy="245.6" r="3.1"/><circle cx="634.1" cy="253.6" r="3.1"/><circle cx="626.1" cy="243.7" r="3.1"/><circle cx="632.8" cy="251.7" r="3.1"/><circle cx="624.2" cy="248.8" r="3.1"/><circle cx="627.8" cy="253.1" r="3.1"/><circle cx="630.3" cy="249.4" r="3.1"/><circle cx="629.1" cy="256.4" r="3.1"/><circle cx="638" cy="248" r="3.1"/><circle cx="635.6" cy="245.4" r="3.1"/><circle cx="631.4" cy="254.9" r="3.1"/><circle cx="638.3" cy="247.9" r="3.1"/><circle cx="630.5" cy="251.4" r="3.1"/><circle cx="623.6" cy="250.1" r="3.1"/><circle cx="627" cy="252.4" r="3.1"/><circle cx="626.7" cy="241.6" r="3.1"/><circle cx="631.2" cy="251.8" r="3.1"/><circle cx="627.9" cy="255.5" r="3.1"/><circle cx="629.4" cy="245.9" r="3.1"/><circle cx="633.3" cy="241.8" r="3.1"/><circle cx="713" cy="142" r="3.1"/><circle cx="691" cy="169" r="3.1"/><circle cx="743" cy="189" r="3.1"/><circle cx="738" cy="183" r="3.1"/><circle cx="718" cy="222" r="3.1"/><circle cx="719" cy="223" r="3.1"/><circle cx="690" cy="251" r="3.1"/><circle cx="680" cy="232" r="3.1"/><circle cx="680" cy="246" r="3.1"/><circle cx="831" cy="146" r="3.1"/><circle cx="834" cy="147" r="3.1"/><circle cx="838" cy="143" r="3.1"/><circle cx="820" cy="202" r="3.1"/><circle cx="823" cy="198" r="3.1"/><circle cx="874" cy="215" r="3.1"/><circle cx="905" cy="198" r="3.1"/><circle cx="912" cy="143" r="3.1"/><circle cx="939" cy="155" r="3.1"/><circle cx="941" cy="157" r="3.1"/><circle cx="966" cy="155" r="3.1"/><circle cx="970" cy="154" r="3.1"/><circle cx="932" cy="163" r="3.1"/><circle cx="931" cy="166" r="3.1"/><circle cx="929" cy="170" r="3.1"/><circle cx="924" cy="174" r="3.1"/><circle cx="937" cy="179" r="3.1"/><circle cx="924" cy="182" r="3.1"/><circle cx="924" cy="188" r="3.1"/><circle cx="958" cy="181" r="3.1"/><circle cx="965" cy="282" r="3.1"/><circle cx="721.8" cy="184.2" r="3.1"/><circle cx="726.7" cy="178.1" r="3.1"/><circle cx="727.9" cy="178.1" r="3.1"/><circle cx="716.8" cy="185.4" r="3.1"/><circle cx="726.2" cy="173.7" r="3.1"/><circle cx="730.2" cy="180.9" r="3.1"/><circle cx="715.6" cy="185.2" r="3.1"/><circle cx="725.3" cy="184.1" r="3.1"/><circle cx="724.5" cy="178.1" r="3.1"/><circle cx="714.6" cy="183.3" r="3.1"/><circle cx="723.2" cy="177.2" r="3.1"/><circle cx="725.7" cy="179.5" r="3.1"/><circle cx="727.9" cy="176.8" r="3.1"/><circle cx="722.8" cy="170.5" r="3.1"/><circle cx="720" cy="183" r="3.1"/><circle cx="731.3" cy="177.1" r="3.1"/><circle cx="722.3" cy="186.6" r="3.1"/><circle cx="720.7" cy="183.3" r="3.1"/><circle cx="732.6" cy="179.2" r="3.1"/><circle cx="730.6" cy="175.4" r="3.1"/><circle cx="724.6" cy="178.5" r="3.1"/><circle cx="723.8" cy="185.2" r="3.1"/><circle cx="733.3" cy="176.6" r="3.1"/><circle cx="718.8" cy="181.9" r="3.1"/><circle cx="368.6" cy="318" r="3.1"/><circle cx="375.7" cy="316.3" r="3.1"/><circle cx="375" cy="314.2" r="3.1"/><circle cx="375.7" cy="314.2" r="3.1"/><circle cx="369.9" cy="315.7" r="3.1"/><circle cx="371.2" cy="318.9" r="3.1"/><circle cx="373.4" cy="316" r="3.1"/><circle cx="375" cy="319.9" r="3.1"/><circle cx="373" cy="317.9" r="3.1"/><circle cx="378.1" cy="317.5" r="3.1"/><circle cx="423" cy="339" r="3.1"/><circle cx="366" cy="382" r="3.1"/><circle cx="446" cy="409" r="3.1"/><circle cx="474" cy="410" r="3.1"/><circle cx="475.5" cy="412" r="3.1"/><circle cx="477" cy="414" r="3.1"/><circle cx="479" cy="415" r="3.1"/><circle cx="459" cy="426" r="3.1"/><circle cx="454" cy="433" r="3.1"/><circle cx="492" cy="395" r="3.1"/><circle cx="495" cy="421" r="3.1"/><circle cx="511" cy="445" r="3.1"/><circle cx="492" cy="454" r="3.1"/><circle cx="501" cy="457" r="3.1"/><circle cx="505" cy="459" r="3.1"/><circle cx="508" cy="453" r="3.1"/><circle cx="513" cy="458" r="3.1"/><circle cx="518" cy="460" r="3.1"/><circle cx="519" cy="464" r="3.1"/><circle cx="412" cy="483" r="3.1"/><circle cx="400" cy="495" r="3.1"/><circle cx="445" cy="498" r="3.1"/><circle cx="461" cy="507" r="3.1"/><circle cx="518" cy="302" r="3.1"/><circle cx="517" cy="304" r="3.1"/><circle cx="544" cy="275" r="3.1"/><circle cx="597" cy="321" r="3.1"/><circle cx="596.5" cy="322" r="3.1"/><circle cx="650" cy="333" r="3.1"/><circle cx="667" cy="333" r="3.1"/><circle cx="671" cy="331" r="3.1"/><circle cx="669" cy="340" r="3.1"/><circle cx="696" cy="362" r="3.1"/><circle cx="546" cy="358" r="3.1"/><circle cx="549" cy="360" r="3.1"/><circle cx="551" cy="358.5" r="3.1"/><circle cx="550" cy="365" r="3.1"/><circle cx="549.5" cy="369" r="3.1"/><circle cx="551" cy="372" r="3.1"/><circle cx="560" cy="375" r="3.1"/><circle cx="523" cy="368" r="3.1"/><circle cx="527" cy="366" r="3.1"/><circle cx="524" cy="377" r="3.1"/><circle cx="531" cy="381" r="3.1"/><circle cx="523" cy="388" r="3.1"/><circle cx="595" cy="376" r="3.1"/><circle cx="597" cy="377" r="3.1"/><circle cx="679" cy="380" r="3.1"/><circle cx="684" cy="389" r="3.1"/><circle cx="686" cy="392" r="3.1"/><circle cx="678" cy="397" r="3.1"/><circle cx="654" cy="405" r="3.1"/><circle cx="674" cy="410" r="3.1"/><circle cx="609" cy="428" r="3.1"/><circle cx="616" cy="437" r="3.1"/><circle cx="624" cy="432" r="3.1"/><circle cx="626" cy="436" r="3.1"/><circle cx="561" cy="446" r="3.1"/><circle cx="614" cy="450" r="3.1"/><circle cx="615" cy="454" r="3.1"/><circle cx="621" cy="454" r="3.1"/><circle cx="625" cy="453" r="3.1"/><circle cx="635" cy="452" r="3.1"/><circle cx="618" cy="462" r="3.1"/><circle cx="578" cy="493" r="3.1"/><circle cx="578.6" cy="494" r="3.1"/><circle cx="582" cy="503" r="3.1"/><circle cx="558" cy="507" r="3.1"/><circle cx="480.9" cy="501.6" r="3.1"/><circle cx="481.3" cy="501.2" r="3.1"/><circle cx="482.1" cy="503.2" r="3.1"/><circle cx="483.4" cy="504.1" r="3.1"/><circle cx="486.5" cy="506.5" r="3.1"/><circle cx="488.3" cy="506.2" r="3.1"/><circle cx="488.6" cy="508.8" r="3.1"/><circle cx="490.8" cy="508.3" r="3.1"/><circle cx="655.1" cy="503" r="3.1"/><circle cx="663.1" cy="505.2" r="3.1"/><circle cx="647.4" cy="496.8" r="3.1"/><circle cx="643.1" cy="503.8" r="3.1"/><circle cx="647.8" cy="498.8" r="3.1"/><circle cx="659.4" cy="493" r="3.1"/><circle cx="659.8" cy="498.9" r="3.1"/><circle cx="641.6" cy="500.1" r="3.1"/><circle cx="662.7" cy="492.6" r="3.1"/><circle cx="662.9" cy="500.1" r="3.1"/><circle cx="659.8" cy="501.4" r="3.1"/><circle cx="666.3" cy="498" r="3.1"/><circle cx="688.6" cy="434.2" r="3.1"/><circle cx="686.4" cy="427" r="3.1"/><circle cx="675.8" cy="468.4" r="3.1"/><circle cx="683.4" cy="438.7" r="3.1"/><circle cx="663.4" cy="428.6" r="3.1"/><circle cx="679.6" cy="459.8" r="3.1"/><circle cx="683" cy="452.5" r="3.1"/><circle cx="676.5" cy="465.2" r="3.1"/><circle cx="671.5" cy="431" r="3.1"/><circle cx="689" cy="443.2" r="3.1"/><circle cx="673.1" cy="430.4" r="3.1"/><circle cx="673.4" cy="454.5" r="3.1"/><circle cx="681.4" cy="420.7" r="3.1"/><circle cx="683.2" cy="445.7" r="3.1"/><circle cx="664.7" cy="455.6" r="3.1"/><circle cx="672.9" cy="435.1" r="3.1"/><circle cx="686" cy="463.4" r="3.1"/><circle cx="667.6" cy="450.6" r="3.1"/><circle cx="669.7" cy="469.4" r="3.1"/><circle cx="671" cy="462.9" r="3.1"/><circle cx="668.5" cy="457.1" r="3.1"/><circle cx="690.8" cy="419.4" r="3.1"/><circle cx="670.9" cy="452.1" r="3.1"/><circle cx="675.7" cy="428.6" r="3.1"/><circle cx="696.9" cy="443.1" r="3.1"/><circle cx="660.1" cy="454.5" r="3.1"/><circle cx="660.6" cy="457.7" r="3.1"/><circle cx="668.8" cy="444.9" r="3.1"/><circle cx="692.5" cy="444.1" r="3.1"/><circle cx="664.3" cy="419.9" r="3.1"/><circle cx="691" cy="454.6" r="3.1"/><circle cx="666.7" cy="457.5" r="3.1"/><circle cx="683.8" cy="454.7" r="3.1"/><circle cx="657" cy="438.2" r="3.1"/><circle cx="688.4" cy="455.3" r="3.1"/><circle cx="684" cy="414.2" r="3.1"/><circle cx="679.4" cy="452.1" r="3.1"/><circle cx="696.4" cy="431.6" r="3.1"/><circle cx="672.2" cy="442.8" r="3.1"/><circle cx="688.7" cy="433.6" r="3.1"/><circle cx="690.6" cy="428.6" r="3.1"/><circle cx="680.8" cy="431.3" r="3.1"/><circle cx="679.2" cy="428.2" r="3.1"/><circle cx="661.1" cy="457.6" r="3.1"/><circle cx="681.3" cy="430.7" r="3.1"/><circle cx="679.6" cy="460.6" r="3.1"/><circle cx="664.1" cy="439.9" r="3.1"/><circle cx="684.5" cy="452.4" r="3.1"/><circle cx="673.9" cy="413.9" r="3.1"/><circle cx="692.2" cy="447.7" r="3.1"/><circle cx="677.2" cy="436.1" r="3.1"/><circle cx="680.8" cy="433.2" r="3.1"/><circle cx="664.4" cy="429" r="3.1"/><circle cx="668.9" cy="430.1" r="3.1"/><circle cx="662.9" cy="453" r="3.1"/><circle cx="661.8" cy="453" r="3.1"/><circle cx="663.9" cy="448.5" r="3.1"/><circle cx="693.3" cy="445.5" r="3.1"/><circle cx="666.8" cy="443" r="3.1"/><circle cx="678.6" cy="415.6" r="3.1"/><circle cx="668.4" cy="445.3" r="3.1"/><circle cx="670.2" cy="443.6" r="3.1"/><circle cx="690.4" cy="498.4" r="3.1"/><circle cx="691.8" cy="496" r="3.1"/><circle cx="681.2" cy="487.7" r="3.1"/><circle cx="681.4" cy="483.2" r="3.1"/><circle cx="682.7" cy="468.7" r="3.1"/><circle cx="680.7" cy="487.6" r="3.1"/><circle cx="675.4" cy="487.7" r="3.1"/><circle cx="688.9" cy="485.5" r="3.1"/><circle cx="692.7" cy="470.8" r="3.1"/><circle cx="682.6" cy="468.3" r="3.1"/><circle cx="688.8" cy="508.4" r="3.1"/><circle cx="670.3" cy="489.1" r="3.1"/><circle cx="688.9" cy="483.5" r="3.1"/><circle cx="687.2" cy="467.4" r="3.1"/><circle cx="691.6" cy="493.2" r="3.1"/><circle cx="684.2" cy="479.2" r="3.1"/><circle cx="689.8" cy="481" r="3.1"/><circle cx="686.1" cy="480.4" r="3.1"/><circle cx="670.6" cy="487.7" r="3.1"/><circle cx="685.9" cy="498.9" r="3.1"/><circle cx="676.1" cy="487.5" r="3.1"/><circle cx="689.8" cy="490.2" r="3.1"/><circle cx="691.2" cy="506.1" r="3.1"/><circle cx="678.3" cy="469.2" r="3.1"/><circle cx="690.1" cy="505" r="3.1"/><circle cx="691.6" cy="498.6" r="3.1"/><circle cx="678.5" cy="478" r="3.1"/><circle cx="691.3" cy="476.3" r="3.1"/><circle cx="672.5" cy="478" r="3.1"/><circle cx="695" cy="501.4" r="3.1"/><circle cx="678" cy="477.9" r="3.1"/><circle cx="686.1" cy="477.2" r="3.1"/><circle cx="694.6" cy="487" r="3.1"/><circle cx="676.2" cy="502.8" r="3.1"/><circle cx="765" cy="293" r="3.1"/><circle cx="718" cy="315" r="3.1"/><circle cx="722" cy="316" r="3.1"/><circle cx="722" cy="324" r="3.1"/><circle cx="739" cy="353" r="3.1"/><circle cx="696" cy="362" r="3.1"/><circle cx="704" cy="382" r="3.1"/><circle cx="842" cy="317" r="3.1"/><circle cx="882" cy="319" r="3.1"/><circle cx="832" cy="353" r="3.1"/><circle cx="833" cy="356" r="3.1"/><circle cx="855" cy="358" r="3.1"/><circle cx="858" cy="358" r="3.1"/><circle cx="853" cy="370" r="3.1"/><circle cx="856" cy="368" r="3.1"/><circle cx="823" cy="373" r="3.1"/><circle cx="844" cy="394" r="3.1"/><circle cx="847" cy="392" r="3.1"/><circle cx="777" cy="400" r="3.1"/><circle cx="768" cy="415" r="3.1"/><circle cx="750" cy="416" r="3.1"/><circle cx="746" cy="419" r="3.1"/><circle cx="747" cy="424" r="3.1"/><circle cx="741" cy="426" r="3.1"/><circle cx="736" cy="429" r="3.1"/><circle cx="753" cy="425" r="3.1"/><circle cx="715" cy="434" r="3.1"/><circle cx="719" cy="437" r="3.1"/><circle cx="730" cy="437" r="3.1"/><circle cx="741" cy="443" r="3.1"/><circle cx="751" cy="441" r="3.1"/><circle cx="732" cy="452" r="3.1"/><circle cx="794" cy="445" r="3.1"/><circle cx="708" cy="461" r="3.1"/><circle cx="727" cy="468" r="3.1"/><circle cx="747" cy="477" r="3.1"/><circle cx="801" cy="485" r="3.1"/><circle cx="812" cy="495" r="3.1"/><circle cx="757" cy="493" r="3.1"/><circle cx="765" cy="499" r="3.1"/><circle cx="766" cy="500" r="3.1"/><circle cx="826" cy="507" r="3.1"/><circle cx="726" cy="507" r="3.1"/><circle cx="863" cy="506" r="3.1"/><circle cx="866" cy="501" r="3.1"/><circle cx="915" cy="506" r="3.1"/><circle cx="923" cy="284" r="3.1"/><circle cx="965" cy="283" r="3.1"/><circle cx="972" cy="305" r="3.1"/><circle cx="922" cy="390" r="3.1"/><circle cx="923" cy="388" r="3.1"/><circle cx="961" cy="386" r="3.1"/><circle cx="937" cy="414" r="3.1"/><circle cx="937" cy="416" r="3.1"/><circle cx="106" cy="621" r="3.1"/><circle cx="109" cy="621" r="3.1"/><circle cx="45" cy="626" r="3.1"/><circle cx="49" cy="626" r="3.1"/><circle cx="123" cy="644" r="3.1"/><circle cx="130" cy="654" r="3.1"/><circle cx="147" cy="665" r="3.1"/><circle cx="175" cy="680" r="3.1"/><circle cx="154" cy="691" r="3.1"/><circle cx="160" cy="694" r="3.1"/><circle cx="202" cy="729" r="3.1"/><circle cx="18" cy="692" r="3.1"/><circle cx="10" cy="691" r="3.1"/><circle cx="10" cy="707" r="3.1"/><circle cx="10" cy="715" r="3.1"/><circle cx="16" cy="729" r="3.1"/><circle cx="314" cy="530" r="3.1"/><circle cx="318" cy="528" r="3.1"/><circle cx="321" cy="533" r="3.1"/><circle cx="316" cy="537" r="3.1"/><circle cx="319" cy="541" r="3.1"/><circle cx="210" cy="569" r="3.1"/><circle cx="212" cy="572" r="3.1"/><circle cx="279" cy="593" r="3.1"/><circle cx="221" cy="607" r="3.1"/><circle cx="240" cy="635" r="3.1"/><circle cx="322" cy="620" r="3.1"/><circle cx="325" cy="618" r="3.1"/><circle cx="328" cy="616" r="3.1"/><circle cx="327" cy="621" r="3.1"/><circle cx="194" cy="667" r="3.1"/><circle cx="258" cy="673" r="3.1"/><circle cx="401" cy="496" r="3.1"/><circle cx="446" cy="498" r="3.1"/><circle cx="470" cy="525" r="3.1"/><circle cx="402" cy="523" r="3.1"/><circle cx="405" cy="530" r="3.1"/><circle cx="454" cy="548" r="3.1"/><circle cx="454" cy="551" r="3.1"/><circle cx="464" cy="553" r="3.1"/><circle cx="467" cy="555" r="3.1"/><circle cx="449" cy="559" r="3.1"/><circle cx="451" cy="562" r="3.1"/><circle cx="450" cy="564" r="3.1"/><circle cx="448" cy="561" r="3.1"/><circle cx="452" cy="560" r="3.1"/><circle cx="454" cy="582" r="3.1"/><circle cx="494" cy="576" r="3.1"/><circle cx="510" cy="551" r="3.1"/><circle cx="538" cy="572" r="3.1"/><circle cx="558" cy="506" r="3.1"/><circle cx="582" cy="503" r="3.1"/><circle cx="579" cy="495" r="3.1"/><circle cx="562" cy="547" r="3.1"/><circle cx="566" cy="543" r="3.1"/><circle cx="570" cy="544" r="3.1"/><circle cx="606" cy="540" r="3.1"/><circle cx="607" cy="541" r="3.1"/><circle cx="591" cy="576" r="3.1"/><circle cx="593" cy="583" r="3.1"/><circle cx="596" cy="583" r="3.1"/><circle cx="501" cy="595" r="3.1"/><circle cx="500" cy="599" r="3.1"/><circle cx="490" cy="601" r="3.1"/><circle cx="491" cy="606" r="3.1"/><circle cx="492" cy="609" r="3.1"/><circle cx="453" cy="600" r="3.1"/><circle cx="463" cy="604" r="3.1"/><circle cx="478" cy="619" r="3.1"/><circle cx="478" cy="623" r="3.1"/><circle cx="418" cy="623" r="3.1"/><circle cx="548" cy="608" r="3.1"/><circle cx="566" cy="609" r="3.1"/><circle cx="518" cy="631" r="3.1"/><circle cx="486" cy="651" r="3.1"/><circle cx="523" cy="664" r="3.1"/><circle cx="394" cy="659" r="3.1"/><circle cx="403" cy="689" r="3.1"/><circle cx="513" cy="703" r="3.1"/><circle cx="509" cy="713" r="3.1"/><circle cx="588" cy="643" r="3.1"/><circle cx="577" cy="658" r="3.1"/><circle cx="578" cy="668" r="3.1"/><circle cx="582" cy="668" r="3.1"/><circle cx="601" cy="672" r="3.1"/><circle cx="610" cy="678" r="3.1"/><circle cx="621" cy="678" r="3.1"/><circle cx="653" cy="637" r="3.1"/><circle cx="635" cy="693" r="3.1"/><circle cx="550" cy="699" r="3.1"/><circle cx="546" cy="707" r="3.1"/><circle cx="569" cy="694" r="3.1"/><circle cx="574" cy="703" r="3.1"/><circle cx="576" cy="711" r="3.1"/><circle cx="591" cy="703" r="3.1"/><circle cx="589" cy="713" r="3.1"/><circle cx="596" cy="711" r="3.1"/><circle cx="610" cy="713" r="3.1"/><circle cx="611" cy="715" r="3.1"/><circle cx="623" cy="702" r="3.1"/><circle cx="629" cy="711" r="3.1"/><circle cx="534" cy="727" r="3.1"/><circle cx="558" cy="730" r="3.1"/><circle cx="579" cy="729" r="3.1"/><circle cx="579" cy="734" r="3.1"/><circle cx="615" cy="732" r="3.1"/><circle cx="620" cy="730" r="3.1"/><circle cx="664" cy="683" r="3.1"/><circle cx="666" cy="689" r="3.1"/><circle cx="670" cy="691" r="3.1"/><circle cx="673" cy="688" r="3.1"/><circle cx="680" cy="634" r="3.1"/><circle cx="647" cy="573" r="3.1"/><circle cx="649" cy="575" r="3.1"/><circle cx="651" cy="578" r="3.1"/><circle cx="655" cy="580" r="3.1"/><circle cx="657" cy="582" r="3.1"/><circle cx="654" cy="577" r="3.1"/><circle cx="461.7" cy="505.5" r="3.1"/><circle cx="462.4" cy="507.5" r="3.1"/><circle cx="464.1" cy="510.6" r="3.1"/><circle cx="465.2" cy="510.7" r="3.1"/><circle cx="466.5" cy="512.3" r="3.1"/><circle cx="468.1" cy="513.8" r="3.1"/><circle cx="470.4" cy="515.4" r="3.1"/><circle cx="468.9" cy="518" r="3.1"/><circle cx="470.3" cy="516.8" r="3.1"/><circle cx="471.1" cy="520.9" r="3.1"/><circle cx="473" cy="521.2" r="3.1"/><circle cx="475.3" cy="524" r="3.1"/><circle cx="475.4" cy="524.5" r="3.1"/><circle cx="475.5" cy="527.5" r="3.1"/><circle cx="480" cy="526.2" r="3.1"/><circle cx="481.4" cy="529.6" r="3.1"/><circle cx="481.4" cy="530" r="3.1"/><circle cx="480.9" cy="529.8" r="3.1"/><circle cx="484.5" cy="534.3" r="3.1"/><circle cx="486.2" cy="534.8" r="3.1"/><circle cx="486" cy="538" r="3.1"/><circle cx="486.5" cy="538.9" r="3.1"/><circle cx="478.9" cy="502.8" r="3.1"/><circle cx="479.1" cy="500.3" r="3.1"/><circle cx="483.7" cy="504.6" r="3.1"/><circle cx="484.1" cy="503.8" r="3.1"/><circle cx="485.2" cy="506.2" r="3.1"/><circle cx="485.7" cy="509.5" r="3.1"/><circle cx="487.3" cy="509.4" r="3.1"/><circle cx="487.1" cy="511.4" r="3.1"/><circle cx="487.4" cy="510.3" r="3.1"/><circle cx="487.6" cy="514.5" r="3.1"/><circle cx="487.9" cy="512" r="3.1"/><circle cx="491.1" cy="514.5" r="3.1"/><circle cx="490" cy="516.8" r="3.1"/><circle cx="494.3" cy="519.1" r="3.1"/><circle cx="494.4" cy="518.2" r="3.1"/><circle cx="479.1" cy="697.2" r="3.1"/><circle cx="477.2" cy="701.9" r="3.1"/><circle cx="482.1" cy="698.1" r="3.1"/><circle cx="478.4" cy="702.2" r="3.1"/><circle cx="476" cy="705.3" r="3.1"/><circle cx="484.9" cy="704.4" r="3.1"/><circle cx="478.3" cy="697.8" r="3.1"/><circle cx="479" cy="698" r="3.1"/><circle cx="474.2" cy="705.2" r="3.1"/><circle cx="482.8" cy="706.5" r="3.1"/><circle cx="476.7" cy="706.8" r="3.1"/><circle cx="473.6" cy="703.5" r="3.1"/><circle cx="474.8" cy="706.7" r="3.1"/><circle cx="473.6" cy="698.9" r="3.1"/><circle cx="470.4" cy="709.2" r="3.1"/><circle cx="464.9" cy="702.8" r="3.1"/><circle cx="473.6" cy="702.2" r="3.1"/><circle cx="468.8" cy="705.4" r="3.1"/><circle cx="475.9" cy="698.9" r="3.1"/><circle cx="472.7" cy="698.1" r="3.1"/><circle cx="477.1" cy="709.4" r="3.1"/><circle cx="483.4" cy="706.4" r="3.1"/><circle cx="475.2" cy="703.2" r="3.1"/><circle cx="477.9" cy="708.8" r="3.1"/><circle cx="475.7" cy="702.9" r="3.1"/><circle cx="467.3" cy="703.3" r="3.1"/><circle cx="476.4" cy="700.1" r="3.1"/><circle cx="468.5" cy="703.1" r="3.1"/><circle cx="477.8" cy="699.9" r="3.1"/><circle cx="480.5" cy="701.7" r="3.1"/><circle cx="477" cy="708.7" r="3.1"/><circle cx="471.4" cy="703" r="3.1"/><circle cx="684.7" cy="515" r="3.1"/><circle cx="697.7" cy="498.3" r="3.1"/><circle cx="697.2" cy="499.4" r="3.1"/><circle cx="677.7" cy="535" r="3.1"/><circle cx="665.7" cy="537.2" r="3.1"/><circle cx="718.5" cy="534.6" r="3.1"/><circle cx="706.2" cy="523" r="3.1"/><circle cx="688.3" cy="547.5" r="3.1"/><circle cx="670.1" cy="520.9" r="3.1"/><circle cx="703.3" cy="512" r="3.1"/><circle cx="667" cy="526" r="3.1"/><circle cx="691.8" cy="496.7" r="3.1"/><circle cx="678.8" cy="507.9" r="3.1"/><circle cx="684.8" cy="530.8" r="3.1"/><circle cx="706.3" cy="502" r="3.1"/><circle cx="690.3" cy="509.5" r="3.1"/><circle cx="663.3" cy="530.2" r="3.1"/><circle cx="680.4" cy="516.3" r="3.1"/><circle cx="659.9" cy="527.2" r="3.1"/><circle cx="692.1" cy="533.2" r="3.1"/><circle cx="681.9" cy="543.3" r="3.1"/><circle cx="698.4" cy="511.8" r="3.1"/><circle cx="700.4" cy="532.6" r="3.1"/><circle cx="679.6" cy="538.9" r="3.1"/><circle cx="701.3" cy="534.6" r="3.1"/><circle cx="703.5" cy="546.7" r="3.1"/><circle cx="689.6" cy="512.1" r="3.1"/><circle cx="701.5" cy="518.9" r="3.1"/><circle cx="665.8" cy="539.5" r="3.1"/><circle cx="699.1" cy="498" r="3.1"/><circle cx="677.2" cy="525.9" r="3.1"/><circle cx="683.8" cy="514" r="3.1"/><circle cx="696.7" cy="537.8" r="3.1"/><circle cx="712" cy="524.7" r="3.1"/><circle cx="698.2" cy="498.5" r="3.1"/><circle cx="664" cy="520.9" r="3.1"/><circle cx="678.5" cy="523.4" r="3.1"/><circle cx="673.8" cy="510.2" r="3.1"/><circle cx="689.2" cy="494.4" r="3.1"/><circle cx="667.7" cy="530" r="3.1"/><circle cx="690.9" cy="502.8" r="3.1"/><circle cx="694.9" cy="544.6" r="3.1"/><circle cx="712.8" cy="504.1" r="3.1"/><circle cx="681.3" cy="496.4" r="3.1"/><circle cx="679.3" cy="500.7" r="3.1"/><circle cx="672.8" cy="525.5" r="3.1"/><circle cx="683.6" cy="514.7" r="3.1"/><circle cx="664.7" cy="533" r="3.1"/><circle cx="684.8" cy="499.4" r="3.1"/><circle cx="691" cy="539.2" r="3.1"/><circle cx="665.2" cy="527.1" r="3.1"/><circle cx="667.5" cy="533.4" r="3.1"/><circle cx="704.2" cy="515.9" r="3.1"/><circle cx="674.1" cy="500.6" r="3.1"/><circle cx="672.8" cy="533.6" r="3.1"/><circle cx="697.6" cy="520.1" r="3.1"/><circle cx="664.5" cy="504" r="3.1"/><circle cx="669.7" cy="496.4" r="3.1"/><circle cx="665.2" cy="504.7" r="3.1"/><circle cx="662.1" cy="502" r="3.1"/><circle cx="666.7" cy="498.7" r="3.1"/><circle cx="662.7" cy="498.7" r="3.1"/><circle cx="662.3" cy="504.2" r="3.1"/><circle cx="671.9" cy="503.7" r="3.1"/><circle cx="675" cy="624.9" r="3.1"/><circle cx="705.8" cy="593.6" r="3.1"/><circle cx="717.9" cy="571.4" r="3.1"/><circle cx="703.2" cy="587.6" r="3.1"/><circle cx="715.6" cy="576.4" r="3.1"/><circle cx="704.3" cy="600.3" r="3.1"/><circle cx="730.9" cy="591.8" r="3.1"/><circle cx="700" cy="610.8" r="3.1"/><circle cx="712.1" cy="612.8" r="3.1"/><circle cx="703.9" cy="580.3" r="3.1"/><circle cx="721.8" cy="626.5" r="3.1"/><circle cx="704.2" cy="586.5" r="3.1"/><circle cx="724.2" cy="583.2" r="3.1"/><circle cx="706.4" cy="572.7" r="3.1"/><circle cx="727.9" cy="581.3" r="3.1"/><circle cx="709.4" cy="587.2" r="3.1"/><circle cx="689.7" cy="576.8" r="3.1"/><circle cx="698.7" cy="577.5" r="3.1"/><circle cx="722.1" cy="583" r="3.1"/><circle cx="698.2" cy="616.4" r="3.1"/><circle cx="718" cy="618.3" r="3.1"/><circle cx="725.5" cy="608.3" r="3.1"/><circle cx="717.3" cy="618.8" r="3.1"/><circle cx="670.6" cy="600.3" r="3.1"/><circle cx="702.1" cy="597.9" r="3.1"/><circle cx="714.8" cy="580.4" r="3.1"/><circle cx="669.9" cy="589.4" r="3.1"/><circle cx="713.2" cy="582.5" r="3.1"/><circle cx="665.8" cy="616.3" r="3.1"/><circle cx="728.4" cy="612.4" r="3.1"/><circle cx="695.6" cy="595.7" r="3.1"/><circle cx="674.5" cy="582.1" r="3.1"/><circle cx="720.9" cy="591.8" r="3.1"/><circle cx="728.4" cy="597.2" r="3.1"/><circle cx="662.3" cy="603.1" r="3.1"/><circle cx="733.1" cy="606.1" r="3.1"/><circle cx="683.6" cy="586" r="3.1"/><circle cx="715.6" cy="584.3" r="3.1"/><circle cx="671.4" cy="603.9" r="3.1"/><circle cx="702.4" cy="584.5" r="3.1"/><circle cx="676.1" cy="608.8" r="3.1"/><circle cx="665.7" cy="589.7" r="3.1"/><circle cx="690.3" cy="629.8" r="3.1"/><circle cx="676.6" cy="613.7" r="3.1"/><circle cx="696.1" cy="624" r="3.1"/><circle cx="732" cy="595.7" r="3.1"/><circle cx="706" cy="581.1" r="3.1"/><circle cx="691" cy="617" r="3.1"/><circle cx="672.7" cy="586" r="3.1"/><circle cx="701.7" cy="593.4" r="3.1"/><circle cx="693.6" cy="568.5" r="3.1"/><circle cx="691.4" cy="597.9" r="3.1"/><circle cx="699" cy="602.5" r="3.1"/><circle cx="714.1" cy="630.3" r="3.1"/><circle cx="674.8" cy="582.6" r="3.1"/><circle cx="725.3" cy="597.7" r="3.1"/><circle cx="717" cy="601.4" r="3.1"/><circle cx="717.2" cy="600.6" r="3.1"/><circle cx="716.2" cy="601.8" r="3.1"/><circle cx="724.9" cy="613.1" r="3.1"/><circle cx="714.6" cy="608.1" r="3.1"/><circle cx="726.4" cy="608.3" r="3.1"/><circle cx="731.6" cy="607.8" r="3.1"/><circle cx="729.9" cy="602.3" r="3.1"/><circle cx="716.8" cy="612" r="3.1"/><circle cx="724.7" cy="599.4" r="3.1"/><circle cx="722.7" cy="610.9" r="3.1"/><circle cx="718" cy="608.4" r="3.1"/><circle cx="715.7" cy="609" r="3.1"/><circle cx="725.1" cy="605.2" r="3.1"/><circle cx="721.2" cy="605.3" r="3.1"/><circle cx="729.6" cy="611.5" r="3.1"/><circle cx="714.5" cy="602.1" r="3.1"/><circle cx="721.9" cy="606.4" r="3.1"/><circle cx="717.2" cy="610.5" r="3.1"/><circle cx="732.2" cy="602.6" r="3.1"/><circle cx="716.7" cy="606.9" r="3.1"/><circle cx="729.4" cy="610.3" r="3.1"/><circle cx="723.9" cy="609.4" r="3.1"/><circle cx="748" cy="552" r="3.1"/><circle cx="748" cy="598" r="3.1"/><circle cx="776" cy="582" r="3.1"/><circle cx="778" cy="584" r="3.1"/><circle cx="777" cy="586" r="3.1"/><circle cx="779" cy="583" r="3.1"/><circle cx="780" cy="586" r="3.1"/><circle cx="826" cy="580" r="3.1"/><circle cx="828" cy="582" r="3.1"/><circle cx="853" cy="563" r="3.1"/><circle cx="765" cy="499" r="3.1"/><circle cx="766" cy="501" r="3.1"/><circle cx="777" cy="519" r="3.1"/><circle cx="780" cy="515" r="3.1"/><circle cx="785" cy="518" r="3.1"/><circle cx="813" cy="496" r="3.1"/><circle cx="826" cy="507" r="3.1"/><circle cx="862" cy="506" r="3.1"/><circle cx="865" cy="509" r="3.1"/><circle cx="867" cy="501" r="3.1"/><circle cx="866" cy="505" r="3.1"/><circle cx="915" cy="505" r="3.1"/><circle cx="915.5" cy="508" r="3.1"/><circle cx="914.5" cy="510" r="3.1"/><circle cx="915" cy="512" r="3.1"/><circle cx="760" cy="673" r="3.1"/><circle cx="770" cy="672" r="3.1"/><circle cx="775" cy="674" r="3.1"/><circle cx="779" cy="678" r="3.1"/><circle cx="789" cy="671" r="3.1"/><circle cx="801" cy="671" r="3.1"/><circle cx="805" cy="672" r="3.1"/><circle cx="777" cy="660" r="3.1"/><circle cx="830" cy="652" r="3.1"/><circle cx="830" cy="667" r="3.1"/><circle cx="837" cy="673" r="3.1"/><circle cx="840" cy="672" r="3.1"/><circle cx="831" cy="680" r="3.1"/><circle cx="875" cy="650" r="3.1"/><circle cx="876" cy="651" r="3.1"/><circle cx="894" cy="638" r="3.1"/><circle cx="904" cy="645" r="3.1"/><circle cx="900" cy="659" r="3.1"/><circle cx="892" cy="668" r="3.1"/><circle cx="958" cy="679" r="3.1"/><circle cx="738" cy="707" r="3.1"/><circle cx="743" cy="712" r="3.1"/><circle cx="729" cy="716" r="3.1"/><circle cx="710" cy="713" r="3.1"/><circle cx="698" cy="704" r="3.1"/><circle cx="924" cy="732" r="3.1"/><circle cx="663" cy="683" r="3.1"/><circle cx="670" cy="689" r="3.1"/><circle cx="672" cy="687" r="3.1"/><circle cx="664" cy="691" r="3.1"/><circle cx="678.6" cy="665" r="3.1"/><circle cx="676.7" cy="662.8" r="3.1"/><circle cx="680.6" cy="664.6" r="3.1"/><circle cx="680.2" cy="663.2" r="3.1"/><circle cx="685.6" cy="665.7" r="3.1"/><circle cx="678.4" cy="671" r="3.1"/><circle cx="678.8" cy="666.4" r="3.1"/><circle cx="679.1" cy="659.2" r="3.1"/><circle cx="682.7" cy="660.3" r="3.1"/><circle cx="684.2" cy="667.8" r="3.1"/><circle cx="676.5" cy="660.4" r="3.1"/><circle cx="682.1" cy="663.5" r="3.1"/><circle cx="685.4" cy="663.7" r="3.1"/><circle cx="679.1" cy="665.1" r="3.1"/><circle cx="673.2" cy="659.9" r="3.1"/><circle cx="682.4" cy="666.9" r="3.1"/><circle cx="677.5" cy="662.2" r="3.1"/><circle cx="682" cy="661.3" r="3.1"/><circle cx="683.1" cy="666.6" r="3.1"/><circle cx="672.7" cy="662.9" r="3.1"/><circle cx="676.5" cy="662.6" r="3.1"/><circle cx="679.6" cy="661" r="3.1"/><circle cx="673.6" cy="660.6" r="3.1"/><circle cx="673.1" cy="667.1" r="3.1"/><circle cx="680" cy="658.4" r="3.1"/><circle cx="679.5" cy="659.9" r="3.1"/><circle cx="677.4" cy="666.7" r="3.1"/><circle cx="685.4" cy="664" r="3.1"/><circle cx="709.4" cy="657.8" r="3.1"/><circle cx="672.8" cy="655.8" r="3.1"/><circle cx="713.3" cy="654.5" r="3.1"/><circle cx="691.8" cy="680.2" r="3.1"/><circle cx="716.4" cy="660.1" r="3.1"/><circle cx="689.2" cy="653.8" r="3.1"/><circle cx="725" cy="657.1" r="3.1"/><circle cx="699.7" cy="668.8" r="3.1"/><circle cx="698.1" cy="681" r="3.1"/><circle cx="673" cy="658.6" r="3.1"/><circle cx="705.5" cy="665.3" r="3.1"/><circle cx="715.7" cy="652.4" r="3.1"/><circle cx="717.8" cy="656.8" r="3.1"/><circle cx="695.2" cy="686.2" r="3.1"/><circle cx="710.2" cy="652.5" r="3.1"/><circle cx="717.7" cy="661.9" r="3.1"/><circle cx="722.4" cy="675.6" r="3.1"/><circle cx="704.6" cy="659.4" r="3.1"/><circle cx="700" cy="648.7" r="3.1"/><circle cx="702.7" cy="683.5" r="3.1"/><circle cx="689.5" cy="655.7" r="3.1"/><circle cx="704.8" cy="677.7" r="3.1"/><circle cx="700.2" cy="650.2" r="3.1"/><circle cx="690" cy="669.5" r="3.1"/><circle cx="710.7" cy="651.5" r="3.1"/><circle cx="702.9" cy="683.1" r="3.1"/><circle cx="726.3" cy="656.6" r="3.1"/><circle cx="676.1" cy="666.1" r="3.1"/><circle cx="687.1" cy="663.4" r="3.1"/><circle cx="705.3" cy="675.9" r="3.1"/><circle cx="693.6" cy="656.5" r="3.1"/><circle cx="679.6" cy="663" r="3.1"/><circle cx="686.6" cy="667.2" r="3.1"/><circle cx="733.6" cy="673.5" r="3.1"/><circle cx="692" cy="672.6" r="3.1"/><circle cx="679.1" cy="654.9" r="3.1"/><circle cx="715" cy="680.8" r="3.1"/><circle cx="685.8" cy="679.9" r="3.1"/><circle cx="931" cy="692.4" r="3.1"/><circle cx="955.7" cy="691" r="3.1"/><circle cx="900.2" cy="693.1" r="3.1"/><circle cx="922.9" cy="707" r="3.1"/><circle cx="896.3" cy="699.4" r="3.1"/><circle cx="928.2" cy="676.7" r="3.1"/><circle cx="941.2" cy="690.1" r="3.1"/><circle cx="939.4" cy="693.8" r="3.1"/><circle cx="929" cy="696.5" r="3.1"/><circle cx="948.4" cy="696" r="3.1"/><circle cx="940.4" cy="683.6" r="3.1"/><circle cx="954.8" cy="686.7" r="3.1"/><circle cx="948.5" cy="697.2" r="3.1"/><circle cx="915.9" cy="695.5" r="3.1"/><circle cx="941.2" cy="689.8" r="3.1"/><circle cx="900.7" cy="686.6" r="3.1"/><circle cx="951" cy="688.2" r="3.1"/><circle cx="907.7" cy="699.1" r="3.1"/><circle cx="942.4" cy="706.1" r="3.1"/><circle cx="940.5" cy="691.6" r="3.1"/><circle cx="941.2" cy="694.1" r="3.1"/><circle cx="906.3" cy="704.9" r="3.1"/><circle cx="949.9" cy="683.2" r="3.1"/><circle cx="953" cy="696.4" r="3.1"/><circle cx="918.3" cy="678.8" r="3.1"/><circle cx="932.8" cy="691.6" r="3.1"/><circle cx="942.6" cy="703.7" r="3.1"/><circle cx="950.2" cy="686.8" r="3.1"/><circle cx="917.3" cy="704.5" r="3.1"/><circle cx="925.5" cy="686.5" r="3.1"/><circle cx="917.5" cy="699.7" r="3.1"/><circle cx="941.3" cy="700.3" r="3.1"/><circle cx="932.9" cy="699.2" r="3.1"/><circle cx="941.9" cy="703" r="3.1"/><circle cx="952.9" cy="693.1" r="3.1"/><circle cx="927.1" cy="695" r="3.1"/><circle cx="938.9" cy="688.5" r="3.1"/><circle cx="953.1" cy="685.6" r="3.1"/><circle cx="934.4" cy="687.9" r="3.1"/><circle cx="915.3" cy="693.7" r="3.1"/><circle cx="952.3" cy="685.2" r="3.1"/><circle cx="909.6" cy="683.7" r="3.1"/><circle cx="909" cy="705" r="3.1"/><circle cx="899.1" cy="693.9" r="3.1"/><circle cx="934.7" cy="698.3" r="3.1"/><circle cx="951.1" cy="697" r="3.1"/><circle cx="913.1" cy="689.9" r="3.1"/><circle cx="936.7" cy="685.6" r="3.1"/><circle cx="913.9" cy="695.5" r="3.1"/><circle cx="921" cy="707.4" r="3.1"/><circle cx="758.9" cy="712.9" r="3.1"/><circle cx="755.4" cy="708.4" r="3.1"/><circle cx="763.8" cy="705.3" r="3.1"/><circle cx="763.4" cy="707.6" r="3.1"/><circle cx="767.5" cy="701" r="3.1"/><circle cx="762.7" cy="717.4" r="3.1"/><circle cx="759.9" cy="714.9" r="3.1"/><circle cx="762.8" cy="716.1" r="3.1"/><circle cx="771" cy="707.2" r="3.1"/><circle cx="763.8" cy="706" r="3.1"/><circle cx="758.7" cy="720.8" r="3.1"/><circle cx="769" cy="712.2" r="3.1"/><circle cx="758.3" cy="721.3" r="3.1"/><circle cx="769.9" cy="709.3" r="3.1"/><circle cx="759" cy="712.4" r="3.1"/><circle cx="770.1" cy="708.2" r="3.1"/><circle cx="756.7" cy="707" r="3.1"/><circle cx="752.2" cy="713.3" r="3.1"/><circle cx="762.5" cy="718.4" r="3.1"/><circle cx="763.7" cy="712.5" r="3.1"/><circle cx="816.2" cy="700.5" r="3.1"/><circle cx="808.5" cy="712.7" r="3.1"/><circle cx="867.2" cy="723.5" r="3.1"/><circle cx="792.4" cy="725.8" r="3.1"/><circle cx="870.3" cy="722.8" r="3.1"/><circle cx="804.6" cy="732" r="3.1"/><circle cx="851.1" cy="707" r="3.1"/><circle cx="875.5" cy="718.8" r="3.1"/><circle cx="781.8" cy="719.6" r="3.1"/><circle cx="825.8" cy="725.2" r="3.1"/><circle cx="842.9" cy="707" r="3.1"/><circle cx="843.8" cy="726.9" r="3.1"/><circle cx="825.2" cy="716.3" r="3.1"/><circle cx="794.9" cy="715.4" r="3.1"/><circle cx="810.7" cy="716.4" r="3.1"/><circle cx="818" cy="700.3" r="3.1"/><circle cx="846.8" cy="708.9" r="3.1"/><circle cx="820.5" cy="705.6" r="3.1"/><circle cx="828.1" cy="712.3" r="3.1"/><circle cx="862.1" cy="703.7" r="3.1"/><circle cx="792.2" cy="717.4" r="3.1"/><circle cx="792" cy="714.3" r="3.1"/><circle cx="876.8" cy="719.4" r="3.1"/><circle cx="831.5" cy="725" r="3.1"/><circle cx="848" cy="722.7" r="3.1"/><circle cx="831.6" cy="714" r="3.1"/><circle cx="862.4" cy="726" r="3.1"/><circle cx="830.2" cy="719.4" r="3.1"/><circle cx="797.2" cy="708.6" r="3.1"/><circle cx="786.5" cy="714.7" r="3.1"/><circle cx="865.2" cy="727.7" r="3.1"/><circle cx="825.8" cy="713" r="3.1"/><circle cx="853.1" cy="726.3" r="3.1"/><circle cx="801.6" cy="717" r="3.1"/><circle cx="850.9" cy="725.4" r="3.1"/><circle cx="853.1" cy="728.1" r="3.1"/><circle cx="17" cy="729" r="3.1"/><circle cx="17" cy="743" r="3.1"/><circle cx="23" cy="744" r="3.1"/><circle cx="26" cy="741" r="3.1"/><circle cx="25" cy="750" r="3.1"/><circle cx="46" cy="770" r="3.1"/><circle cx="47" cy="771" r="3.1"/><circle cx="68" cy="772" r="3.1"/><circle cx="54" cy="787" r="3.1"/><circle cx="55" cy="790" r="3.1"/><circle cx="60" cy="792" r="3.1"/><circle cx="61" cy="796" r="3.1"/><circle cx="56" cy="798" r="3.1"/><circle cx="66" cy="805" r="3.1"/><circle cx="117" cy="826" r="3.1"/><circle cx="120" cy="827" r="3.1"/><circle cx="144" cy="876" r="3.1"/><circle cx="183" cy="887" r="3.1"/><circle cx="201" cy="901" r="3.1"/><circle cx="200" cy="906" r="3.1"/><circle cx="182" cy="921" r="3.1"/><circle cx="184" cy="920" r="3.1"/><circle cx="181" cy="924" r="3.1"/><circle cx="236" cy="934" r="3.1"/><circle cx="11" cy="844" r="3.1"/><circle cx="11" cy="849" r="3.1"/><circle cx="11" cy="870" r="3.1"/><circle cx="16" cy="871" r="3.1"/><circle cx="72" cy="874" r="3.1"/><circle cx="76" cy="870" r="3.1"/><circle cx="71" cy="871" r="3.1"/><circle cx="202" cy="729" r="3.1"/><circle cx="209" cy="768" r="3.1"/><circle cx="337" cy="756" r="3.1"/><circle cx="338" cy="765" r="3.1"/><circle cx="293" cy="832" r="3.1"/><circle cx="293" cy="835" r="3.1"/><circle cx="268" cy="846" r="3.1"/><circle cx="271" cy="852" r="3.1"/><circle cx="277" cy="857" r="3.1"/><circle cx="283" cy="856" r="3.1"/><circle cx="253" cy="861" r="3.1"/><circle cx="256" cy="864" r="3.1"/><circle cx="254" cy="863" r="3.1"/><circle cx="255" cy="862" r="3.1"/><circle cx="320" cy="910" r="3.1"/><circle cx="65.1" cy="742" r="3.1"/><circle cx="67.4" cy="746.9" r="3.1"/><circle cx="66" cy="735.8" r="3.1"/><circle cx="63.7" cy="737.7" r="3.1"/><circle cx="67.6" cy="737.9" r="3.1"/><circle cx="67.8" cy="743.1" r="3.1"/><circle cx="65.3" cy="747.3" r="3.1"/><circle cx="65.2" cy="746.7" r="3.1"/><circle cx="331.6" cy="739.8" r="3.1"/><circle cx="329.5" cy="746.3" r="3.1"/><circle cx="326.8" cy="744.4" r="3.1"/><circle cx="329.1" cy="745.2" r="3.1"/><circle cx="328.9" cy="740.3" r="3.1"/><circle cx="327.1" cy="738.7" r="3.1"/><circle cx="347.7" cy="756.5" r="3.1"/><circle cx="344.6" cy="758.7" r="3.1"/><circle cx="359.4" cy="760.1" r="3.1"/><circle cx="361.9" cy="761.4" r="3.1"/><circle cx="348.8" cy="760.3" r="3.1"/><circle cx="356.2" cy="760.3" r="3.1"/><circle cx="342" cy="754.1" r="3.1"/><circle cx="346.7" cy="751.7" r="3.1"/><circle cx="351.8" cy="753" r="3.1"/><circle cx="353.3" cy="749.8" r="3.1"/><circle cx="344" cy="754.4" r="3.1"/><circle cx="347.3" cy="758.2" r="3.1"/><circle cx="397.1" cy="753.9" r="3.1"/><circle cx="393.3" cy="751.8" r="3.1"/><circle cx="396.4" cy="751.8" r="3.1"/><circle cx="393.7" cy="755" r="3.1"/><circle cx="397.3" cy="755" r="3.1"/><circle cx="393.8" cy="752.1" r="3.1"/><circle cx="414" cy="753" r="3.1"/><circle cx="438" cy="748" r="3.1"/><circle cx="459" cy="763" r="3.1"/><circle cx="534" cy="727" r="3.1"/><circle cx="558" cy="729" r="3.1"/><circle cx="579" cy="729" r="3.1"/><circle cx="579" cy="734" r="3.1"/><circle cx="595" cy="733" r="3.1"/><circle cx="599" cy="756" r="3.1"/><circle cx="630" cy="763" r="3.1"/><circle cx="652" cy="761" r="3.1"/><circle cx="678" cy="754" r="3.1"/><circle cx="610" cy="779" r="3.1"/><circle cx="611" cy="783" r="3.1"/><circle cx="611" cy="787" r="3.1"/><circle cx="670" cy="787" r="3.1"/><circle cx="678" cy="780" r="3.1"/><circle cx="641" cy="808" r="3.1"/><circle cx="659" cy="813" r="3.1"/><circle cx="675" cy="809" r="3.1"/><circle cx="680" cy="849" r="3.1"/><circle cx="622" cy="931" r="3.1"/><circle cx="577" cy="712" r="3.1"/><circle cx="590" cy="713" r="3.1"/><circle cx="610" cy="712" r="3.1"/><circle cx="628" cy="713" r="3.1"/><circle cx="528.9" cy="764" r="3.1"/><circle cx="528.5" cy="756.8" r="3.1"/><circle cx="537.3" cy="756.6" r="3.1"/><circle cx="523.5" cy="760.4" r="3.1"/><circle cx="531.6" cy="755.8" r="3.1"/><circle cx="523.2" cy="761.8" r="3.1"/><circle cx="529.5" cy="755.5" r="3.1"/><circle cx="538.5" cy="765" r="3.1"/><circle cx="540.7" cy="761.1" r="3.1"/><circle cx="525.9" cy="758.8" r="3.1"/><circle cx="539.4" cy="759.9" r="3.1"/><circle cx="524.3" cy="763.6" r="3.1"/><circle cx="537.4" cy="757.6" r="3.1"/><circle cx="527.1" cy="763.8" r="3.1"/><circle cx="523.8" cy="762.3" r="3.1"/><circle cx="530.3" cy="764.6" r="3.1"/><circle cx="526.2" cy="759.7" r="3.1"/><circle cx="528.1" cy="765.8" r="3.1"/><circle cx="536.1" cy="757.6" r="3.1"/><circle cx="528" cy="761.9" r="3.1"/><circle cx="530.7" cy="763.2" r="3.1"/><circle cx="525.2" cy="758.9" r="3.1"/><circle cx="540.2" cy="764" r="3.1"/><circle cx="527.9" cy="765.9" r="3.1"/><circle cx="537.2" cy="756" r="3.1"/><circle cx="533.8" cy="764.8" r="3.1"/><circle cx="547.2" cy="783.8" r="3.1"/><circle cx="556.1" cy="785" r="3.1"/><circle cx="532.6" cy="784.1" r="3.1"/><circle cx="547.5" cy="780.7" r="3.1"/><circle cx="556.1" cy="784" r="3.1"/><circle cx="534.5" cy="783.6" r="3.1"/><circle cx="539.6" cy="785.7" r="3.1"/><circle cx="539.1" cy="782.5" r="3.1"/><circle cx="556.9" cy="782.8" r="3.1"/><circle cx="541.7" cy="783.8" r="3.1"/><circle cx="539.8" cy="786" r="3.1"/><circle cx="536.2" cy="782.7" r="3.1"/><circle cx="556" cy="781" r="3.1"/><circle cx="536.7" cy="784.2" r="3.1"/><circle cx="536.1" cy="780.8" r="3.1"/><circle cx="540.4" cy="786.7" r="3.1"/><circle cx="605.5" cy="736.5" r="3.1"/><circle cx="593.4" cy="751.8" r="3.1"/><circle cx="608.9" cy="733.4" r="3.1"/><circle cx="617.3" cy="748.3" r="3.1"/><circle cx="595" cy="730.9" r="3.1"/><circle cx="621.8" cy="740.3" r="3.1"/><circle cx="594.7" cy="743.3" r="3.1"/><circle cx="598.3" cy="749.3" r="3.1"/><circle cx="592.9" cy="740.8" r="3.1"/><circle cx="608.9" cy="749.7" r="3.1"/><circle cx="592" cy="736.7" r="3.1"/><circle cx="618.7" cy="740.6" r="3.1"/><circle cx="615" cy="743" r="3.1"/><circle cx="604.7" cy="734.5" r="3.1"/><circle cx="601.5" cy="740.3" r="3.1"/><circle cx="595.5" cy="751.4" r="3.1"/><circle cx="587.3" cy="735.9" r="3.1"/><circle cx="606.9" cy="749" r="3.1"/><circle cx="591.8" cy="739" r="3.1"/><circle cx="592.8" cy="734" r="3.1"/><circle cx="617.9" cy="740.8" r="3.1"/><circle cx="595.8" cy="743.2" r="3.1"/><circle cx="612.1" cy="749.7" r="3.1"/><circle cx="607.2" cy="743.4" r="3.1"/><circle cx="609.3" cy="748.6" r="3.1"/><circle cx="609.3" cy="732.6" r="3.1"/><circle cx="802.3" cy="731.4" r="3.1"/><circle cx="823.6" cy="738.7" r="3.1"/><circle cx="789.9" cy="755.2" r="3.1"/><circle cx="793.3" cy="744.8" r="3.1"/><circle cx="799.1" cy="744.5" r="3.1"/><circle cx="817" cy="726.6" r="3.1"/><circle cx="789.5" cy="750.1" r="3.1"/><circle cx="795.2" cy="740.7" r="3.1"/><circle cx="815.9" cy="725.4" r="3.1"/><circle cx="817.3" cy="733" r="3.1"/><circle cx="790.2" cy="728.8" r="3.1"/><circle cx="825.1" cy="743.3" r="3.1"/><circle cx="809.3" cy="726.3" r="3.1"/><circle cx="819.6" cy="724.1" r="3.1"/><circle cx="793.1" cy="754.6" r="3.1"/><circle cx="818.4" cy="732.8" r="3.1"/><circle cx="812.6" cy="733.3" r="3.1"/><circle cx="782.4" cy="750" r="3.1"/><circle cx="802.7" cy="750.1" r="3.1"/><circle cx="813.3" cy="725.2" r="3.1"/><circle cx="803.5" cy="725.6" r="3.1"/><circle cx="807.5" cy="749.7" r="3.1"/><circle cx="810.3" cy="758.8" r="3.1"/><circle cx="794.9" cy="754.4" r="3.1"/><circle cx="814.8" cy="748.6" r="3.1"/><circle cx="787.1" cy="747" r="3.1"/><circle cx="858.2" cy="757.9" r="3.1"/><circle cx="856.3" cy="729.9" r="3.1"/><circle cx="846.5" cy="770.4" r="3.1"/><circle cx="842.1" cy="772" r="3.1"/><circle cx="876.2" cy="759.4" r="3.1"/><circle cx="837.8" cy="765.9" r="3.1"/><circle cx="842.8" cy="739.7" r="3.1"/><circle cx="841.7" cy="790.1" r="3.1"/><circle cx="863.6" cy="772.1" r="3.1"/><circle cx="863.6" cy="719.7" r="3.1"/><circle cx="858.2" cy="773" r="3.1"/><circle cx="842" cy="726.6" r="3.1"/><circle cx="862.7" cy="747" r="3.1"/><circle cx="871.7" cy="742.9" r="3.1"/><circle cx="849.6" cy="780" r="3.1"/><circle cx="867.7" cy="777.9" r="3.1"/><circle cx="843.6" cy="791.7" r="3.1"/><circle cx="826.3" cy="738.7" r="3.1"/><circle cx="846.7" cy="784.7" r="3.1"/><circle cx="854.3" cy="790.1" r="3.1"/><circle cx="865.5" cy="773" r="3.1"/><circle cx="826.9" cy="746.2" r="3.1"/><circle cx="849.2" cy="726.2" r="3.1"/><circle cx="830.3" cy="725.5" r="3.1"/><circle cx="837.2" cy="776.3" r="3.1"/><circle cx="859.7" cy="761.1" r="3.1"/><circle cx="858.8" cy="732.8" r="3.1"/><circle cx="839.5" cy="740.2" r="3.1"/><circle cx="824.9" cy="742.4" r="3.1"/><circle cx="825.3" cy="751.9" r="3.1"/><circle cx="865.4" cy="761.4" r="3.1"/><circle cx="848" cy="766.8" r="3.1"/><circle cx="841.8" cy="730.2" r="3.1"/><circle cx="816.2" cy="774.8" r="3.1"/><circle cx="851.6" cy="713" r="3.1"/><circle cx="854.9" cy="740.3" r="3.1"/><circle cx="844.9" cy="759.1" r="3.1"/><circle cx="832.8" cy="721.1" r="3.1"/><circle cx="831.5" cy="773.7" r="3.1"/><circle cx="828.8" cy="722.5" r="3.1"/><circle cx="846.3" cy="790.6" r="3.1"/><circle cx="828" cy="778.7" r="3.1"/><circle cx="851.4" cy="765" r="3.1"/><circle cx="873.8" cy="733.2" r="3.1"/><circle cx="844.2" cy="743.8" r="3.1"/><circle cx="860.8" cy="756.2" r="3.1"/><circle cx="852.7" cy="773.9" r="3.1"/><circle cx="840.5" cy="757.7" r="3.1"/><circle cx="834.7" cy="783.1" r="3.1"/><circle cx="860.9" cy="786.8" r="3.1"/><circle cx="816.9" cy="736.8" r="3.1"/><circle cx="845.3" cy="779.7" r="3.1"/><circle cx="837" cy="729.3" r="3.1"/><circle cx="880.7" cy="752.2" r="3.1"/><circle cx="849.4" cy="729.8" r="3.1"/><circle cx="879.8" cy="762.4" r="3.1"/><circle cx="839.5" cy="746.3" r="3.1"/><circle cx="846.4" cy="766" r="3.1"/><circle cx="850.5" cy="733.4" r="3.1"/><circle cx="874.3" cy="733.4" r="3.1"/><circle cx="873.1" cy="770" r="3.1"/><circle cx="820.2" cy="774.5" r="3.1"/><circle cx="855.6" cy="732.4" r="3.1"/><circle cx="877.2" cy="773.9" r="3.1"/><circle cx="792.6" cy="800.6" r="3.1"/><circle cx="810.1" cy="770.7" r="3.1"/><circle cx="832.2" cy="773.3" r="3.1"/><circle cx="812.9" cy="791.6" r="3.1"/><circle cx="813.3" cy="775.1" r="3.1"/><circle cx="789.3" cy="788.3" r="3.1"/><circle cx="839.4" cy="805.1" r="3.1"/><circle cx="845.8" cy="795.5" r="3.1"/><circle cx="825.6" cy="778.5" r="3.1"/><circle cx="789.8" cy="783.2" r="3.1"/><circle cx="804.7" cy="776.5" r="3.1"/><circle cx="820" cy="795.8" r="3.1"/><circle cx="807.1" cy="802" r="3.1"/><circle cx="825.4" cy="802.8" r="3.1"/><circle cx="837.6" cy="805.3" r="3.1"/><circle cx="812.5" cy="779.7" r="3.1"/><circle cx="821.2" cy="807.2" r="3.1"/><circle cx="790.9" cy="797.9" r="3.1"/><circle cx="809.6" cy="800.6" r="3.1"/><circle cx="829" cy="784" r="3.1"/><circle cx="803" cy="784.6" r="3.1"/><circle cx="829.5" cy="773.7" r="3.1"/><circle cx="820.9" cy="780.1" r="3.1"/><circle cx="807.6" cy="773.9" r="3.1"/><circle cx="792.8" cy="795.1" r="3.1"/><circle cx="825.3" cy="782.9" r="3.1"/><circle cx="815.3" cy="804" r="3.1"/><circle cx="822.1" cy="795.7" r="3.1"/><circle cx="817.3" cy="800.5" r="3.1"/><circle cx="813.6" cy="774.7" r="3.1"/><circle cx="833.8" cy="798.9" r="3.1"/><circle cx="801.1" cy="792.8" r="3.1"/><circle cx="858.6" cy="804" r="3.1"/><circle cx="875.9" cy="801.1" r="3.1"/><circle cx="856" cy="795.1" r="3.1"/><circle cx="851.9" cy="783.5" r="3.1"/><circle cx="849.9" cy="797.8" r="3.1"/><circle cx="842.9" cy="800.8" r="3.1"/><circle cx="861.4" cy="811.6" r="3.1"/><circle cx="875.2" cy="800.8" r="3.1"/><circle cx="846.2" cy="789.4" r="3.1"/><circle cx="870.8" cy="794.6" r="3.1"/><circle cx="855.9" cy="808.4" r="3.1"/><circle cx="858.1" cy="802.2" r="3.1"/><circle cx="858.8" cy="784.6" r="3.1"/><circle cx="853.5" cy="807" r="3.1"/><circle cx="844.1" cy="788.1" r="3.1"/><circle cx="863.4" cy="796.9" r="3.1"/><circle cx="859.9" cy="784.9" r="3.1"/><circle cx="855.4" cy="790.3" r="3.1"/><circle cx="909.5" cy="797.2" r="3.1"/><circle cx="903.5" cy="795.1" r="3.1"/><circle cx="900.5" cy="789.6" r="3.1"/><circle cx="908.3" cy="787.8" r="3.1"/><circle cx="912.9" cy="792.4" r="3.1"/><circle cx="900" cy="786.1" r="3.1"/><circle cx="903.5" cy="784.1" r="3.1"/><circle cx="912.3" cy="789.2" r="3.1"/><circle cx="902.2" cy="791" r="3.1"/><circle cx="903.8" cy="796.4" r="3.1"/><circle cx="912.9" cy="794" r="3.1"/><circle cx="909.3" cy="795.3" r="3.1"/><circle cx="908.8" cy="790.6" r="3.1"/><circle cx="912.1" cy="792.2" r="3.1"/><circle cx="908.9" cy="796.9" r="3.1"/><circle cx="914.7" cy="791.1" r="3.1"/><circle cx="911.2" cy="785.8" r="3.1"/><circle cx="901.5" cy="792.8" r="3.1"/><circle cx="902.4" cy="786.4" r="3.1"/><circle cx="901.1" cy="793.1" r="3.1"/><circle cx="898.8" cy="793.3" r="3.1"/><circle cx="910.2" cy="784.7" r="3.1"/><circle cx="908.6" cy="794.5" r="3.1"/><circle cx="899.3" cy="793" r="3.1"/><circle cx="903.6" cy="793.7" r="3.1"/><circle cx="910.7" cy="793.2" r="3.1"/><circle cx="887.6" cy="810.2" r="3.1"/><circle cx="910.2" cy="803.5" r="3.1"/><circle cx="912.6" cy="806.6" r="3.1"/><circle cx="891.5" cy="802.5" r="3.1"/><circle cx="909.9" cy="810.7" r="3.1"/><circle cx="894.5" cy="804.9" r="3.1"/><circle cx="888.6" cy="804.2" r="3.1"/><circle cx="889.6" cy="808.9" r="3.1"/><circle cx="897.7" cy="813" r="3.1"/><circle cx="901.6" cy="807" r="3.1"/><circle cx="904" cy="814.9" r="3.1"/><circle cx="896.4" cy="808.9" r="3.1"/><circle cx="950" cy="777" r="3.1"/><circle cx="955" cy="780" r="3.1"/><circle cx="960" cy="778" r="3.1"/><circle cx="965" cy="783" r="3.1"/><circle cx="969" cy="781" r="3.1"/><circle cx="957" cy="784" r="3.1"/><circle cx="963" cy="779" r="3.1"/><circle cx="963" cy="793" r="3.1"/><circle cx="964" cy="798" r="3.1"/><circle cx="941" cy="785" r="3.1"/><circle cx="933" cy="806" r="3.1"/><circle cx="934" cy="807" r="3.1"/><circle cx="924" cy="732" r="3.1"/><circle cx="912" cy="826" r="3.1"/><circle cx="943" cy="828" r="3.1"/><circle cx="937" cy="835" r="3.1"/><circle cx="963" cy="827" r="3.1"/><circle cx="978" cy="832" r="3.1"/><circle cx="974" cy="874" r="3.1"/><circle cx="981" cy="876" r="3.1"/><circle cx="970" cy="872" r="3.1"/><circle cx="977" cy="871" r="3.1"/><circle cx="988" cy="905" r="3.1"/><circle cx="986" cy="934" r="3.1"/><circle cx="811" cy="827" r="3.1"/><circle cx="812" cy="835" r="3.1"/><circle cx="831" cy="823" r="3.1"/><circle cx="831" cy="832" r="3.1"/><circle cx="852" cy="833" r="3.1"/><circle cx="853" cy="826" r="3.1"/><circle cx="786" cy="854" r="3.1"/><circle cx="789" cy="856" r="3.1"/><circle cx="791" cy="855" r="3.1"/><circle cx="793" cy="857" r="3.1"/><circle cx="830" cy="879" r="3.1"/><circle cx="831" cy="884" r="3.1"/><circle cx="829" cy="882" r="3.1"/><circle cx="842" cy="878" r="3.1"/><circle cx="845" cy="882" r="3.1"/><circle cx="849" cy="879" r="3.1"/><circle cx="847" cy="883" r="3.1"/><circle cx="844" cy="880" r="3.1"/><circle cx="817" cy="889" r="3.1"/><circle cx="820" cy="892" r="3.1"/><circle cx="824" cy="890" r="3.1"/><circle cx="822" cy="893" r="3.1"/><circle cx="818" cy="892" r="3.1"/><circle cx="866" cy="890" r="3.1"/><circle cx="811" cy="902" r="3.1"/><circle cx="793" cy="918" r="3.1"/><circle cx="728" cy="834" r="3.1"/><circle cx="732" cy="835" r="3.1"/><circle cx="718" cy="849" r="3.1"/><circle cx="681" cy="849" r="3.1"/><circle cx="684" cy="847" r="3.1"/><circle cx="682" cy="848" r="3.1"/><circle cx="675" cy="809" r="3.1"/><circle cx="661" cy="813" r="3.1"/><circle cx="698" cy="794" r="3.1"/><circle cx="678" cy="780" r="3.1"/><circle cx="670" cy="787" r="3.1"/><circle cx="697" cy="764" r="3.1"/><circle cx="679" cy="754" r="3.1"/><circle cx="684" cy="746" r="3.1"/><circle cx="728" cy="743" r="3.1"/><circle cx="730" cy="739" r="3.1"/><circle cx="710" cy="713" r="3.1"/><circle cx="729" cy="716" r="3.1"/><circle cx="745" cy="713" r="3.1"/><circle cx="745" cy="783" r="3.1"/><circle cx="762" cy="783" r="3.1"/><circle cx="765" cy="802" r="3.1"/><circle cx="765.5" cy="803" r="3.1"/><circle cx="769" cy="753" r="3.1"/><circle cx="784" cy="761" r="3.1"/><circle cx="846" cy="810" r="3.1"/><circle cx="858" cy="812" r="3.1"/><circle cx="870" cy="816" r="3.1"/><circle cx="868" cy="822" r="3.1"/><circle cx="763.4" cy="892.9" r="3.1"/><circle cx="761.5" cy="894.5" r="3.1"/><circle cx="760.1" cy="895.9" r="3.1"/><circle cx="763.8" cy="898.6" r="3.1"/><circle cx="769.2" cy="903.8" r="3.1"/><circle cx="763.4" cy="896.2" r="3.1"/><circle cx="768.6" cy="893.9" r="3.1"/><circle cx="770.8" cy="900.3" r="3.1"/><circle cx="870.3" cy="832.8" r="3.1"/><circle cx="872.2" cy="832.5" r="3.1"/><circle cx="874.1" cy="834.9" r="3.1"/><circle cx="872.9" cy="838.5" r="3.1"/><circle cx="877.4" cy="842.8" r="3.1"/><circle cx="876.5" cy="846" r="3.1"/><circle cx="877.9" cy="847.1" r="3.1"/><circle cx="879.2" cy="849.1" r="3.1"/><circle cx="883.9" cy="847.3" r="3.1"/><circle cx="882.1" cy="850.2" r="3.1"/><circle cx="882.8" cy="853.2" r="3.1"/><circle cx="885.4" cy="855.5" r="3.1"/><circle cx="890.2" cy="857.5" r="3.1"/><circle cx="890.7" cy="861.8" r="3.1"/><circle cx="890.2" cy="863" r="3.1"/><circle cx="901.2" cy="895.1" r="3.1"/><circle cx="903.9" cy="854.6" r="3.1"/><circle cx="927.7" cy="887.1" r="3.1"/><circle cx="912.7" cy="850.8" r="3.1"/><circle cx="913.9" cy="870.7" r="3.1"/><circle cx="907.7" cy="871" r="3.1"/><circle cx="890.2" cy="869" r="3.1"/><circle cx="936.2" cy="892.3" r="3.1"/><circle cx="908.4" cy="864.3" r="3.1"/><circle cx="921.8" cy="892.3" r="3.1"/><circle cx="926.6" cy="859.1" r="3.1"/><circle cx="918.2" cy="878.5" r="3.1"/><circle cx="935" cy="890.9" r="3.1"/><circle cx="923.5" cy="893.8" r="3.1"/><circle cx="909" cy="896.9" r="3.1"/><circle cx="906.9" cy="882.7" r="3.1"/><circle cx="930.1" cy="862.5" r="3.1"/><circle cx="905.3" cy="854.3" r="3.1"/><circle cx="918.2" cy="875" r="3.1"/><circle cx="908.8" cy="884.4" r="3.1"/><circle cx="887.9" cy="875.7" r="3.1"/><circle cx="916.7" cy="871.3" r="3.1"/><circle cx="925.8" cy="897.4" r="3.1"/><circle cx="907.2" cy="861.3" r="3.1"/><circle cx="903.6" cy="877.6" r="3.1"/><circle cx="925.2" cy="862.5" r="3.1"/><circle cx="930.8" cy="861.5" r="3.1"/><circle cx="929.8" cy="882.8" r="3.1"/><circle cx="920.8" cy="900" r="3.1"/><circle cx="909.9" cy="873.1" r="3.1"/><circle cx="923.4" cy="889.7" r="3.1"/><circle cx="893.4" cy="880" r="3.1"/><circle cx="901.9" cy="886" r="3.1"/><circle cx="937.1" cy="876.7" r="3.1"/><circle cx="912.9" cy="879.2" r="3.1"/><circle cx="887.1" cy="882.5" r="3.1"/><circle cx="925.6" cy="878.8" r="3.1"/><circle cx="907.8" cy="864.1" r="3.1"/><circle cx="912" cy="894.2" r="3.1"/><circle cx="913.3" cy="895.6" r="3.1"/><circle cx="887.1" cy="871.5" r="3.1"/><circle cx="920.3" cy="875.8" r="3.1"/><circle cx="900.5" cy="924.1" r="3.1"/><circle cx="927.6" cy="921.3" r="3.1"/><circle cx="905.9" cy="921.7" r="3.1"/><circle cx="909.4" cy="930.6" r="3.1"/><circle cx="921" cy="918.9" r="3.1"/><circle cx="930.5" cy="924.2" r="3.1"/><circle cx="910.5" cy="934.4" r="3.1"/><circle cx="915.1" cy="920.6" r="3.1"/><circle cx="908.6" cy="923" r="3.1"/><circle cx="904.5" cy="925.2" r="3.1"/><circle cx="926.2" cy="928.9" r="3.1"/><circle cx="907.6" cy="935" r="3.1"/><circle cx="904.6" cy="927.6" r="3.1"/><circle cx="916.4" cy="931.4" r="3.1"/><circle cx="911.9" cy="929.7" r="3.1"/><circle cx="933.7" cy="927.4" r="3.1"/><circle cx="903.9" cy="928.7" r="3.1"/><circle cx="906.5" cy="924.9" r="3.1"/><circle cx="918.4" cy="929" r="3.1"/><circle cx="912.6" cy="931.7" r="3.1"/><circle cx="950.2" cy="921.1" r="3.1"/><circle cx="954.8" cy="923.1" r="3.1"/><circle cx="955.7" cy="922.5" r="3.1"/><circle cx="953.6" cy="924.8" r="3.1"/><circle cx="944.9" cy="922.1" r="3.1"/><circle cx="756.1" cy="721.8" r="3.1"/><circle cx="753.5" cy="719.8" r="3.1"/><circle cx="766.7" cy="719" r="3.1"/><circle cx="764.8" cy="714.8" r="3.1"/><circle cx="760.9" cy="718.1" r="3.1"/><circle cx="763.4" cy="720.1" r="3.1"/><circle cx="759.8" cy="713.9" r="3.1"/><circle cx="757.7" cy="718.8" r="3.1"/><circle cx="754.3" cy="713.1" r="3.1"/><circle cx="758.6" cy="714.5" r="3.1"/></g><g fill="#dddde1" fill-opacity=".85" stroke="#3a3a3a" stroke-width=".8"><circle cx="350" cy="72" r="3.3"/><circle cx="15.8" cy="427.3" r="3.3"/><circle cx="379.7" cy="210" r="3.3"/><circle cx="382.7" cy="224" r="3.3"/><circle cx="522" cy="127" r="3.3"/><circle cx="525.5" cy="128" r="3.3"/><circle cx="529" cy="127.5" r="3.3"/><circle cx="590" cy="147" r="3.3"/><circle cx="591" cy="150" r="3.3"/><circle cx="604" cy="157" r="3.3"/><circle cx="605" cy="159" r="3.3"/><circle cx="585" cy="164" r="3.3"/><circle cx="587" cy="170" r="3.3"/><circle cx="591" cy="175" r="3.3"/><circle cx="684.5" cy="143.5" r="3.3"/><circle cx="546" cy="174.5" r="3.3"/><circle cx="548" cy="188" r="3.3"/><circle cx="551" cy="188.5" r="3.3"/><circle cx="551" cy="198" r="3.3"/><circle cx="566.5" cy="199" r="3.3"/><circle cx="571" cy="196" r="3.3"/><circle cx="597" cy="266" r="3.3"/><circle cx="613" cy="242" r="3.3"/><circle cx="538.5" cy="239" r="3.3"/><circle cx="448" cy="150.5" r="3.3"/><circle cx="550.3" cy="131.8" r="3.3"/><circle cx="567.3" cy="130.7" r="3.3"/><circle cx="561.5" cy="126.8" r="3.3"/><circle cx="560.6" cy="142.3" r="3.3"/><circle cx="553.4" cy="143.2" r="3.3"/><circle cx="550.6" cy="132.1" r="3.3"/><circle cx="559.8" cy="139.6" r="3.3"/><circle cx="549.6" cy="121.9" r="3.3"/><circle cx="564.5" cy="138" r="3.3"/><circle cx="561.9" cy="143.5" r="3.3"/><circle cx="560.4" cy="134.1" r="3.3"/><circle cx="567.9" cy="134.8" r="3.3"/><circle cx="570.8" cy="125.3" r="3.3"/><circle cx="556.2" cy="120.1" r="3.3"/><circle cx="566.9" cy="129.1" r="3.3"/><circle cx="564.5" cy="142.7" r="3.3"/><circle cx="557.9" cy="129.9" r="3.3"/><circle cx="552.6" cy="125.7" r="3.3"/><circle cx="551.1" cy="136.9" r="3.3"/><circle cx="558.4" cy="132.6" r="3.3"/><circle cx="685" cy="144" r="3.3"/><circle cx="729" cy="168" r="3.3"/><circle cx="713" cy="246" r="3.3"/><circle cx="932" cy="280" r="3.3"/><circle cx="935" cy="278" r="3.3"/><circle cx="938" cy="279" r="3.3"/><circle cx="942" cy="280" r="3.3"/><circle cx="933" cy="282" r="3.3"/><circle cx="386" cy="386" r="3.3"/><circle cx="384" cy="388" r="3.3"/><circle cx="388" cy="385.5" r="3.3"/><circle cx="433" cy="395" r="3.3"/><circle cx="368" cy="408" r="3.3"/><circle cx="367" cy="405" r="3.3"/><circle cx="438" cy="407" r="3.3"/><circle cx="443" cy="405.5" r="3.3"/><circle cx="459" cy="412" r="3.3"/><circle cx="448" cy="421" r="3.3"/><circle cx="451" cy="424" r="3.3"/><circle cx="432" cy="443" r="3.3"/><circle cx="509" cy="293" r="3.3"/><circle cx="493" cy="420.5" r="3.3"/><circle cx="498" cy="420" r="3.3"/><circle cx="505" cy="428" r="3.3"/><circle cx="657" cy="343" r="3.3"/><circle cx="672" cy="343" r="3.3"/><circle cx="671" cy="358" r="3.3"/><circle cx="547" cy="372" r="3.3"/><circle cx="839" cy="397" r="3.3"/><circle cx="772" cy="464" r="3.3"/><circle cx="863" cy="287" r="3.3"/><circle cx="988" cy="326" r="3.3"/><circle cx="96" cy="533" r="3.3"/><circle cx="99" cy="537" r="3.3"/><circle cx="109" cy="531" r="3.3"/><circle cx="102" cy="542" r="3.3"/><circle cx="90" cy="546" r="3.3"/><circle cx="67" cy="555" r="3.3"/><circle cx="69.5" cy="553" r="3.3"/><circle cx="72" cy="556" r="3.3"/><circle cx="74" cy="553.5" r="3.3"/><circle cx="71" cy="557" r="3.3"/><circle cx="92" cy="571" r="3.3"/><circle cx="101" cy="569" r="3.3"/><circle cx="104" cy="578" r="3.3"/><circle cx="87" cy="580" r="3.3"/><circle cx="92" cy="585" r="3.3"/><circle cx="106" cy="584" r="3.3"/><circle cx="80" cy="586" r="3.3"/><circle cx="81" cy="593" r="3.3"/><circle cx="82" cy="591" r="3.3"/><circle cx="80.5" cy="590" r="3.3"/><circle cx="117" cy="604" r="3.3"/><circle cx="120" cy="616" r="3.3"/><circle cx="14" cy="573" r="3.3"/><circle cx="146" cy="618" r="3.3"/><circle cx="143" cy="649" r="3.3"/><circle cx="141" cy="653" r="3.3"/><circle cx="134" cy="659" r="3.3"/><circle cx="135" cy="663" r="3.3"/><circle cx="124" cy="669" r="3.3"/><circle cx="124" cy="674" r="3.3"/><circle cx="135" cy="672" r="3.3"/><circle cx="157" cy="669" r="3.3"/><circle cx="158" cy="676" r="3.3"/><circle cx="170" cy="677" r="3.3"/><circle cx="149" cy="681" r="3.3"/><circle cx="146" cy="689" r="3.3"/><circle cx="165" cy="689" r="3.3"/><circle cx="167" cy="700" r="3.3"/><circle cx="185" cy="695" r="3.3"/><circle cx="176" cy="706" r="3.3"/><circle cx="184" cy="713" r="3.3"/><circle cx="201" cy="712" r="3.3"/><circle cx="167" cy="719" r="3.3"/><circle cx="172" cy="731" r="3.3"/><circle cx="186" cy="731" r="3.3"/><circle cx="58" cy="671" r="3.3"/><circle cx="42" cy="683" r="3.3"/><circle cx="59" cy="689" r="3.3"/><circle cx="64" cy="694" r="3.3"/><circle cx="54" cy="696" r="3.3"/><circle cx="45" cy="697" r="3.3"/><circle cx="51" cy="712" r="3.3"/><circle cx="46" cy="720" r="3.3"/><circle cx="25" cy="714" r="3.3"/><circle cx="249" cy="530" r="3.3"/><circle cx="254" cy="532" r="3.3"/><circle cx="285" cy="557" r="3.3"/><circle cx="249" cy="564" r="3.3"/><circle cx="259" cy="564" r="3.3"/><circle cx="261" cy="590" r="3.3"/><circle cx="242" cy="617" r="3.3"/><circle cx="328" cy="734" r="3.3"/><circle cx="128.3" cy="637.6" r="3.3"/><circle cx="132.9" cy="636.1" r="3.3"/><circle cx="135.6" cy="635.2" r="3.3"/><circle cx="125.4" cy="634" r="3.3"/><circle cx="124.6" cy="635.3" r="3.3"/><circle cx="132.8" cy="637.2" r="3.3"/><circle cx="137.5" cy="637.3" r="3.3"/><circle cx="127.1" cy="635.2" r="3.3"/><circle cx="244.3" cy="603.4" r="3.3"/><circle cx="251.9" cy="606.8" r="3.3"/><circle cx="249.5" cy="603" r="3.3"/><circle cx="253.6" cy="604.1" r="3.3"/><circle cx="252.8" cy="607" r="3.3"/><circle cx="250.7" cy="610" r="3.3"/><circle cx="247.7" cy="602.1" r="3.3"/><circle cx="382" cy="525" r="3.3"/><circle cx="387" cy="525" r="3.3"/><circle cx="388" cy="529" r="3.3"/><circle cx="342" cy="527" r="3.3"/><circle cx="441" cy="551" r="3.3"/><circle cx="448" cy="573" r="3.3"/><circle cx="447" cy="578" r="3.3"/><circle cx="382" cy="715" r="3.3"/><circle cx="639" cy="703" r="3.3"/><circle cx="640" cy="705" r="3.3"/><circle cx="649" cy="707" r="3.3"/><circle cx="625" cy="725" r="3.3"/><circle cx="649" cy="556" r="3.3"/><circle cx="654" cy="542" r="3.3"/><circle cx="678" cy="619" r="3.3"/><circle cx="671.7" cy="560.1" r="3.3"/><circle cx="676.5" cy="564.4" r="3.3"/><circle cx="686.1" cy="569.9" r="3.3"/><circle cx="684.3" cy="574.5" r="3.3"/><circle cx="674.4" cy="572.3" r="3.3"/><circle cx="666.4" cy="577" r="3.3"/><circle cx="672.8" cy="560.3" r="3.3"/><circle cx="675.2" cy="580" r="3.3"/><circle cx="675.1" cy="552.6" r="3.3"/><circle cx="668.2" cy="569.5" r="3.3"/><circle cx="679.4" cy="559.7" r="3.3"/><circle cx="677.4" cy="577.6" r="3.3"/><circle cx="678.5" cy="554.1" r="3.3"/><circle cx="668.3" cy="561.3" r="3.3"/><circle cx="668.5" cy="567.6" r="3.3"/><circle cx="685.8" cy="568.5" r="3.3"/><circle cx="666.1" cy="557.8" r="3.3"/><circle cx="680.7" cy="559.1" r="3.3"/><circle cx="672.5" cy="584.5" r="3.3"/><circle cx="687" cy="583.3" r="3.3"/><circle cx="666.4" cy="584.9" r="3.3"/><circle cx="674.9" cy="582.6" r="3.3"/><circle cx="675.8" cy="583.4" r="3.3"/><circle cx="676.3" cy="571.9" r="3.3"/><circle cx="674.4" cy="561.1" r="3.3"/><circle cx="676.3" cy="581.4" r="3.3"/><circle cx="665" cy="572.6" r="3.3"/><circle cx="667" cy="559.3" r="3.3"/><circle cx="786" cy="626" r="3.3"/><circle cx="702" cy="676" r="3.3"/><circle cx="707" cy="674" r="3.3"/><circle cx="756.5" cy="718.7" r="3.3"/><circle cx="756.5" cy="723.1" r="3.3"/><circle cx="759.3" cy="723.6" r="3.3"/><circle cx="753.4" cy="722.1" r="3.3"/><circle cx="757.1" cy="725" r="3.3"/><circle cx="25" cy="714" r="3.3"/><circle cx="50" cy="712" r="3.3"/><circle cx="46" cy="720" r="3.3"/><circle cx="32" cy="750" r="3.3"/><circle cx="35" cy="735" r="3.3"/><circle cx="61" cy="767" r="3.3"/><circle cx="50" cy="779" r="3.3"/><circle cx="54" cy="779" r="3.3"/><circle cx="64" cy="782" r="3.3"/><circle cx="71" cy="782" r="3.3"/><circle cx="43" cy="788" r="3.3"/><circle cx="70" cy="810" r="3.3"/><circle cx="82" cy="820" r="3.3"/><circle cx="93" cy="825" r="3.3"/><circle cx="104" cy="830" r="3.3"/><circle cx="114" cy="833" r="3.3"/><circle cx="110" cy="842" r="3.3"/><circle cx="114" cy="844" r="3.3"/><circle cx="122" cy="856" r="3.3"/><circle cx="123" cy="857.5" r="3.3"/><circle cx="134" cy="847" r="3.3"/><circle cx="142" cy="851" r="3.3"/><circle cx="140" cy="855" r="3.3"/><circle cx="134" cy="864" r="3.3"/><circle cx="136" cy="863" r="3.3"/><circle cx="138" cy="869" r="3.3"/><circle cx="143" cy="871" r="3.3"/><circle cx="168" cy="870" r="3.3"/><circle cx="156" cy="890" r="3.3"/><circle cx="165" cy="888" r="3.3"/><circle cx="212" cy="897" r="3.3"/><circle cx="164" cy="933" r="3.3"/><circle cx="170" cy="932" r="3.3"/><circle cx="177" cy="933" r="3.3"/><circle cx="205" cy="928" r="3.3"/><circle cx="208" cy="931" r="3.3"/><circle cx="210" cy="933" r="3.3"/><circle cx="207" cy="930" r="3.3"/><circle cx="209" cy="927" r="3.3"/><circle cx="225" cy="931" r="3.3"/><circle cx="231" cy="923" r="3.3"/><circle cx="56" cy="876" r="3.3"/><circle cx="61" cy="875" r="3.3"/><circle cx="58" cy="881" r="3.3"/><circle cx="58" cy="885" r="3.3"/><circle cx="167" cy="719" r="3.3"/><circle cx="172" cy="731" r="3.3"/><circle cx="179" cy="735" r="3.3"/><circle cx="185" cy="731" r="3.3"/><circle cx="184" cy="713" r="3.3"/><circle cx="256" cy="738" r="3.3"/><circle cx="241" cy="744" r="3.3"/><circle cx="235" cy="754" r="3.3"/><circle cx="236" cy="758" r="3.3"/><circle cx="241" cy="767" r="3.3"/><circle cx="222" cy="764" r="3.3"/><circle cx="321" cy="737" r="3.3"/><circle cx="292" cy="824" r="3.3"/><circle cx="258" cy="845" r="3.3"/><circle cx="290" cy="849" r="3.3"/><circle cx="292" cy="858" r="3.3"/><circle cx="304" cy="856" r="3.3"/><circle cx="307" cy="855" r="3.3"/><circle cx="261" cy="857" r="3.3"/><circle cx="265" cy="860" r="3.3"/><circle cx="287" cy="870" r="3.3"/><circle cx="293" cy="872" r="3.3"/><circle cx="302" cy="871" r="3.3"/><circle cx="309" cy="869" r="3.3"/><circle cx="314" cy="870" r="3.3"/><circle cx="317" cy="874" r="3.3"/><circle cx="309" cy="919" r="3.3"/><circle cx="311" cy="921" r="3.3"/><circle cx="333" cy="926" r="3.3"/><circle cx="293" cy="932" r="3.3"/><circle cx="268" cy="933" r="3.3"/><circle cx="253.2" cy="803.1" r="3.3"/><circle cx="239.9" cy="802.2" r="3.3"/><circle cx="256.1" cy="813.8" r="3.3"/><circle cx="257.5" cy="803.6" r="3.3"/><circle cx="239.5" cy="810.4" r="3.3"/><circle cx="241.9" cy="805" r="3.3"/><circle cx="260.7" cy="802.8" r="3.3"/><circle cx="246.6" cy="810.2" r="3.3"/><circle cx="245.6" cy="811.7" r="3.3"/><circle cx="261.6" cy="804.9" r="3.3"/><circle cx="260" cy="801.3" r="3.3"/><circle cx="251.7" cy="804.1" r="3.3"/><circle cx="270.1" cy="816.4" r="3.3"/><circle cx="275.8" cy="815.8" r="3.3"/><circle cx="271.2" cy="819.2" r="3.3"/><circle cx="272.1" cy="820.3" r="3.3"/><circle cx="276.4" cy="818.7" r="3.3"/><circle cx="443.3" cy="749.8" r="3.3"/><circle cx="439.4" cy="747.8" r="3.3"/><circle cx="445.8" cy="752.1" r="3.3"/><circle cx="437.1" cy="750.5" r="3.3"/><circle cx="435" cy="752.4" r="3.3"/><circle cx="438.8" cy="748.2" r="3.3"/><circle cx="440.2" cy="755.3" r="3.3"/><circle cx="438.8" cy="747.8" r="3.3"/><circle cx="359" cy="756" r="3.3"/><circle cx="403" cy="754" r="3.3"/><circle cx="382" cy="715" r="3.3"/><circle cx="900" cy="816" r="3.3"/><circle cx="719" cy="833" r="3.3"/><circle cx="722" cy="834" r="3.3"/><circle cx="811" cy="902" r="3.3"/></g><g fill="#ffff00" stroke="#5a5a20" stroke-width=".6"><circle cx="452" cy="113" r="5.3"/><circle cx="457" cy="117" r="5.3"/><circle cx="461" cy="112" r="5.3"/><circle cx="466" cy="114" r="5.3"/><circle cx="455" cy="120" r="5.3"/><circle cx="463" cy="119" r="5.3"/><circle cx="449" cy="118" r="5.3"/><circle cx="460" cy="116" r="5.3"/><circle cx="567" cy="218" r="5.3"/><circle cx="575" cy="224" r="5.3"/><circle cx="568" cy="228" r="5.3"/><circle cx="578" cy="233" r="5.3"/><circle cx="565" cy="236" r="5.3"/><circle cx="572" cy="231" r="5.3"/><circle cx="563" cy="226" r="5.3"/><circle cx="602" cy="99" r="5"/><circle cx="711" cy="151" r="5.3"/><circle cx="713" cy="148" r="5.3"/><circle cx="723" cy="176" r="5.3"/><circle cx="817" cy="415" r="5.3"/><circle cx="719" cy="556" r="5.3"/><circle cx="708" cy="603" r="5.3"/><circle cx="721" cy="612" r="5.3"/><circle cx="723" cy="613" r="5.3"/><circle cx="577" cy="760" r="5.3"/><circle cx="846" cy="824" r="5.3"/></g><circle cx="727" cy="618" r="4.5" fill="#9fd48a" stroke="#777" stroke-width=".6"/><path d="M391 52c2.2 3.2 3.3 5.3 3.3 7a3.3 3.3 0 0 1-6.6 0c0-1.700 1.1-3.800 3.3-7z" fill="#1ea7e1"/><path d="M409 156.5c2.2 3.2 3.3 5.3 3.3 7a3.3 3.3 0 0 1-6.6 0c0-1.700 1.1-3.800 3.3-7z" fill="#1ea7e1"/><path d="M901 354c2.2 3.2 3.3 5.3 3.3 7a3.3 3.3 0 0 1-6.6 0c0-1.700 1.1-3.800 3.3-7z" fill="#1ea7e1"/><path d="M655 527c2.2 3.2 3.3 5.3 3.3 7a3.3 3.3 0 0 1-6.6 0c0-1.700 1.1-3.800 3.3-7z" fill="#1ea7e1"/><path d="M73 792c2.2 3.2 3.3 5.3 3.3 7a3.3 3.3 0 0 1-6.6 0c0-1.700 1.1-3.800 3.3-7z" fill="#1ea7e1"/><circle cx="757" cy="52" r="3.5" fill="#1ea7e1"/><path d="M588 741l3.500-6 3.500 6z" fill="#2a9ad0"/></svg><div class="mbtn" style="left:11px;top:11px;width:49px;height:24px"></div><div class="mbtn" style="left:844px;top:11px;width:24px;height:24px"></div><div class="mbtn" style="left:874px;top:11px;width:96px;height:24px"></div><div class="mbtn" style="left:946px;top:826px;width:24px;height:47px;border-radius:1px"></div><div class="mbtn" style="left:946.3px;top:796.3px;width:23.4px;height:23.4px;border-radius:50%"></div><div class="abs" style="left:0;top:885px;width:981px;height:12px;background:rgba(2,26,42,.93)"></div><div class="abs" style="left:4px;top:885px;width:900px;font-size:8.83px;line-height:11px;color:#b9c5ce;white-space:nowrap">Esri, CGIAR, USGS | County of Sacramento, California State Parks, Esri, TomTom, Garmin, SafeGraph, FAO, METI/NASA, USGS, Bureau of Land Management, EPA, NPS, USFWS | For questions or comments about this web …</div><div class="abs" style="left:911.5px;top:885px;font-size:9.1px;line-height:11px;color:#b9c5ce;white-space:nowrap">Powered by Esri</div><svg width="981" height="896.5" viewBox="9 51 981 896.5" font-family="Liberation Sans, sans-serif"><path d="M44.5 62v24" stroke="#5b6b76" stroke-width=".8"/><g fill="none" stroke="#8fa2ae" stroke-width="1"><rect x="27" y="69" width="10" height="10" stroke-dasharray="1.2 1.2"/><path d="M31.5 71.5h4v4M31.5 71.5v-2M30 73l-1 0" /><path d="M53.5 71l6 6M59.5 71l-6 6"/></g><g fill="none" stroke="#8fa2ae" stroke-width="1"><circle cx="863.5" cy="72.6" r="3.4"/><path d="M866 75.2l3.6 3.4"/><path d="M890 74.5l5-5 1.2 1.2v-1.2h1.6v2.8l2.2 2.2M891.2 73.8v5.4h2.6v-3.2h2.4v3.2h2.6v-5.4"/><path d="M917 70.5h7.5M917 73.5h7.5M917 76.5h7.5M917 79.5h7.5" /><path d="M943 69.5l6 3-6 3-6-3zM937 75l6 3 6-3M937 77.5l6 3 6-3"/><rect x="961.5" y="68.5" width="4.6" height="4.6"/><rect x="968" y="68.5" width="4.6" height="4.6"/><rect x="961.5" y="75" width="4.6" height="4.6"/><rect x="968" y="75" width="4.6" height="4.6"/></g><g fill="#8fa2ae"><rect x="913.5" y="69.7" width="2" height="2"/><rect x="913.5" y="72.7" width="2" height="2"/><rect x="913.5" y="75.7" width="2" height="2"/><rect x="913.5" y="78.7" width="2" height="2"/></g><path d="M967 852.5l2.6 6.5h-5.2z" fill="#b4c0c9"/><path d="M967 865.5l2.6-6.5h-5.2z" fill="none" stroke="#8fa2ae" stroke-width=".8"/><path d="M955 900.5h24" stroke="#16303f" stroke-width="1"/><path d="M963.5 889h7M967 885.5v7M963.5 912.5h7" stroke="#7d909c" stroke-width="1"/><rect x="20" y="903.8" width="99.5" height="4" fill="#021a2a"/><rect x="20" y="903.8" width="25" height="2.6" fill="#bfcad2"/><rect x="69.7" y="903.8" width="25" height="2.6" fill="#bfcad2"/><g font-size="9.3" font-weight="bold" fill="#0b2a42" stroke="#dfe9f0" stroke-width="1.6" paint-order="stroke"><text x="20.5" y="921.5">0</text><text x="96" y="921.5">10mi</text></g></svg></div><div id="popup"><div class="abs" style="left:0;top:24px;width:345px;height:1px;background:#081f2f"></div><div class="abs" style="left:290px;top:0;width:1px;height:24px;background:#081f2f"></div><div class="abs" style="left:0;top:61px;width:345px;height:1px;background:#081f2f"></div><div class="abs" style="left:0;top:86px;width:345px;height:1px;background:#081f2f"></div><div class="abs" style="left:316px;top:5px;font-size:9.8px;color:#93a4b0;line-height:13px;white-space:nowrap">1 of 3</div><div class="abs" style="left:9.5px;top:34.8px;font-size:12px;font-weight:bold;color:#c9d6de;line-height:15px;white-space:nowrap">SAN JOAQUIN</div><div class="abs" style="left:24.5px;top:68px;font-size:9.3px;color:#7f919d;line-height:13px;white-space:nowrap">Zoom to</div><div class="abs" style="left:89px;top:68px;font-size:9.3px;color:#7f919d;line-height:13px;white-space:nowrap">Pan</div><svg width="345" height="120"><g fill="none" stroke="#93a4b0" stroke-width="1" stroke-linecap="square">
<path d="M13.7 9.2L10 12l3.7 2.8"/><path d="M34.5 9.2L38.2 12l-3.7 2.8"/>
<path d="M288.2 43.8l3.1-2.9 3.1 2.9"/><path d="M324.2 40l6 6M330.2 40l-6 6"/>
<path d="M302.5 8h7M302.5 12h7M302.5 16h7"/></g>
<g fill="#93a4b0"><rect x="298.5" y="7" width="2" height="2"/><rect x="298.5" y="11" width="2" height="2"/><rect x="298.5" y="15" width="2" height="2"/></g>
<g fill="none" stroke="#93a4b0" stroke-width="1"><circle cx="11" cy="73" r="3.6"/><path d="M13.6 75.6l3.6 3.6"/><path d="M10 71.3v3.4l2.4-1.7z" fill="#93a4b0" stroke="none"/><circle cx="16.5" cy="78.5" r="1"/>
<path d="M77 69.5v9M72.5 74h9M75.5 71l1.5-1.5 1.5 1.5M75.5 77l1.5 1.5 1.5-1.5M74 72.5l-1.5 1.5 1.5 1.5M80 72.5l1.5 1.5-1.5 1.5"/></g></svg><div class="row o" style="top:95.75px"><i>OBJECTID</i><u>630485</u></div><div class="row" style="top:116.00px"><i>Join_Count</i><u>1</u></div><div class="row o" style="top:136.25px"><i>TARGET_FID</i><u>630485</u></div><div class="row" style="top:156.50px"><i>gm_county_name</i><u>SAN JOAQUIN</u></div><div class="row o" style="top:176.75px"><i>gm_dataset_name</i><u>WB_CLEANUP</u></div><div class="row" style="top:197.00px"><i>gm_well_category</i><u>Monitoring</u></div><div class="row o" style="top:217.25px"><i>gm_data_source</i><u>GeoTracker</u></div><div class="row" style="top:237.50px"><i>gm_well_id</i><u>L10008827999-MW-16</u></div><div class="row o" style="top:257.75px"><i>gm_chemical_vvl</i><u>NO3N</u></div><div class="row" style="top:278.00px"><i>gm_chemical_name</i><u>Nitrate as N</u></div><div class="row o" style="top:298.25px"><i>gm_latitude</i><u>37.875521</u></div><div class="row" style="top:318.50px"><i>gm_longitude</i><u>-121.183332</u></div><div class="row o" style="top:338.75px"><i>gm_well_depth_ft</i><u>88.65</u></div><div class="row" style="top:359.00px"><i>gm_top_depth_of_screen_ft</i><u>69</u></div><div class="row o" style="top:379.25px"><i>gm_bottom_depth_of_screen_ft</i><u>89</u></div><div class="row" style="top:399.50px"><i>STATION_ID</i><u>STK</u></div></div><div class="panel" style="left:994.5px;top:50.5px;width:907.5px;height:415px"></div><div class="panel" style="left:994.5px;top:497.2px;width:907.5px;height:57px"></div><div class="panel" style="left:994.5px;top:558px;width:907.5px;height:389.5px"></div><div class="tab" style="left:1007.5px;width:83.5px">Precipitation</div><div class="tab" style="left:1098px;width:95.5px">GW Elev: WDL</div><div class="tab" style="left:1200px;width:128px">GW Elev: GeoTracker</div><div class="tab" style="left:1334px;width:99px">GW Elev: NWIS</div><div class="abs" style="left:1007.5px;top:490px;width:83.5px;height:2px;background:#8fb0ee"></div><div class="abs" style="left:994.5px;top:502px;width:907.5px;text-align:center;font-size:8px;font-weight:bold;letter-spacing:-.3px;color:#d5dee5;line-height:12px;padding-left:8px">Water Quality Results: Nitrate as N (MG/L)</div><div class="abs" style="left:995.5px;top:519px;width:906px;height:1px;background:#4a5a66"></div><svg width="1905" height="951" font-family="Liberation Sans, sans-serif"><path d="M1030.3 420.8H1889.5" stroke="#0e2637" stroke-width="1"/><text x="1028" y="421.3" font-size="8.5" fill="#c3ced6" text-anchor="end">0</text><path d="M1030.3 382.7H1889.5" stroke="#0e2637" stroke-width="1"/><text x="1028" y="383.2" font-size="8.5" fill="#c3ced6" text-anchor="end">1</text><path d="M1030.3 344.7H1889.5" stroke="#0e2637" stroke-width="1"/><text x="1028" y="345.2" font-size="8.5" fill="#c3ced6" text-anchor="end">2</text><path d="M1030.3 306.6H1889.5" stroke="#0e2637" stroke-width="1"/><text x="1028" y="307.1" font-size="8.5" fill="#c3ced6" text-anchor="end">3</text><path d="M1030.3 268.5H1889.5" stroke="#0e2637" stroke-width="1"/><text x="1028" y="269" font-size="8.5" fill="#c3ced6" text-anchor="end">4</text><path d="M1030.3 230.5H1889.5" stroke="#0e2637" stroke-width="1"/><text x="1028" y="231" font-size="8.5" fill="#c3ced6" text-anchor="end">5</text><path d="M1030.3 192.4H1889.5" stroke="#0e2637" stroke-width="1"/><text x="1028" y="192.9" font-size="8.5" fill="#c3ced6" text-anchor="end">6</text><path d="M1030.3 154.3H1889.5" stroke="#0e2637" stroke-width="1"/><text x="1028" y="154.8" font-size="8.5" fill="#c3ced6" text-anchor="end">7</text><path d="M1030.3 116.2H1889.5" stroke="#0e2637" stroke-width="1"/><text x="1028" y="116.7" font-size="8.5" fill="#c3ced6" text-anchor="end">8</text><path d="M1030.3 78.2H1889.5" stroke="#0e2637" stroke-width="1"/><text x="1028" y="78.7" font-size="8.5" fill="#c3ced6" text-anchor="end">9</text><path d="M1034.3 78.2V424.8" stroke="#1a3344" stroke-width="1"/><path d="M1188.3 78.2V424.8" stroke="#1a3344" stroke-width="1"/><path d="M1357.6 78.2V424.8" stroke="#1a3344" stroke-width="1"/><path d="M1527.4 78.2V424.8" stroke="#1a3344" stroke-width="1"/><path d="M1697.5 78.2V424.8" stroke="#1a3344" stroke-width="1"/><path d="M1867.5 78.2V424.8" stroke="#1a3344" stroke-width="1"/><text x="1102.4" y="436" font-size="8.5" fill="#c3ced6" text-anchor="middle">Jan 2020</text><text x="1272.2" y="436" font-size="8.5" fill="#c3ced6" text-anchor="middle">Jan 2021</text><text x="1442" y="436" font-size="8.5" fill="#c3ced6" text-anchor="middle">Jan 2022</text><text x="1611.8" y="436" font-size="8.5" fill="#c3ced6" text-anchor="middle">Jan 2023</text><text x="1781.6" y="436" font-size="8.5" fill="#c3ced6" text-anchor="middle">Jan 2024</text><text x="1461" y="455" font-size="8.5" font-weight="bold" fill="#dfe6eb" text-anchor="middle" letter-spacing="-.2">Sampling Date</text><text transform="translate(1012 250) rotate(-90)" font-size="7.8" font-weight="bold" fill="#dfe6eb" text-anchor="middle" letter-spacing="-.2">Precipitation (in/mo)</text><path d="M1034.3 384.6L1045.1 420.8L1059.3 333.6L1073.5 367.5L1087.7 417.4L1101.8 420.8L1116 420.8L1130.2 420.8L1144.4 420.8L1158.6 420.8L1172.8 415.5L1186.9 357.6L1201.1 310.4L1215.3 393.8L1229.5 393.8L1243.7 418.5L1257.9 420.8L1272.1 420.8L1286.2 420.8L1300.4 420.8L1314.6 418.5L1328.8 217.9L1343 398.7L1357.2 229.3L1371.4 420.8L1385.5 420.8L1399.7 395.3L1413.9 391.5L1428.1 420.8L1442.3 418.5L1456.5 420.8L1470.6 420.8L1484.8 418.5L1499 420.8L1513.2 381.6L1527.4 241.1L1541.6 98L1555.8 358.7L1569.9 296.7L1584.1 419.7L1598.3 417.4L1612.5 420.8L1626.7 420.8L1640.9 420.8L1655.1 420.8L1669.2 417.8L1683.4 413.6L1697.6 331L1711.8 276.5L1726 299.4L1740.2 360.3L1754.3 337.8L1768.5 399.9L1782.7 420.8L1796.9 420.8L1811.1 420.8L1825.3 420.8L1839.5 420.8L1853.6 340.5L1867.8 307.4L1882 415.5L1889.5 322.9" fill="none" stroke="#2590c4" stroke-width="1.1" stroke-linejoin="round"/><g fill="#27a5dc"><circle cx="1045.1" cy="420.8" r="3.6"/><circle cx="1059.3" cy="333.6" r="3.6"/><circle cx="1073.5" cy="367.5" r="3.6"/><circle cx="1087.7" cy="417.4" r="3.6"/><circle cx="1101.8" cy="420.8" r="3.6"/><circle cx="1116" cy="420.8" r="3.6"/><circle cx="1130.2" cy="420.8" r="3.6"/><circle cx="1144.4" cy="420.8" r="3.6"/><circle cx="1158.6" cy="420.8" r="3.6"/><circle cx="1172.8" cy="415.5" r="3.6"/><circle cx="1186.9" cy="357.6" r="3.6"/><circle cx="1201.1" cy="310.4" r="3.6"/><circle cx="1215.3" cy="393.8" r="3.6"/><circle cx="1229.5" cy="393.8" r="3.6"/><circle cx="1243.7" cy="418.5" r="3.6"/><circle cx="1257.9" cy="420.8" r="3.6"/><circle cx="1272.1" cy="420.8" r="3.6"/><circle cx="1286.2" cy="420.8" r="3.6"/><circle cx="1300.4" cy="420.8" r="3.6"/><circle cx="1314.6" cy="418.5" r="3.6"/><circle cx="1328.8" cy="217.9" r="3.6"/><circle cx="1343" cy="398.7" r="3.6"/><circle cx="1357.2" cy="229.3" r="3.6"/><circle cx="1371.4" cy="420.8" r="3.6"/><circle cx="1385.5" cy="420.8" r="3.6"/><circle cx="1399.7" cy="395.3" r="3.6"/><circle cx="1413.9" cy="391.5" r="3.6"/><circle cx="1428.1" cy="420.8" r="3.6"/><circle cx="1442.3" cy="418.5" r="3.6"/><circle cx="1456.5" cy="420.8" r="3.6"/><circle cx="1470.6" cy="420.8" r="3.6"/><circle cx="1484.8" cy="418.5" r="3.6"/><circle cx="1499" cy="420.8" r="3.6"/><circle cx="1513.2" cy="381.6" r="3.6"/><circle cx="1527.4" cy="241.1" r="3.6"/><circle cx="1541.6" cy="98" r="3.6"/><circle cx="1555.8" cy="358.7" r="3.6"/><circle cx="1569.9" cy="296.7" r="3.6"/><circle cx="1584.1" cy="419.7" r="3.6"/><circle cx="1598.3" cy="417.4" r="3.6"/><circle cx="1612.5" cy="420.8" r="3.6"/><circle cx="1626.7" cy="420.8" r="3.6"/><circle cx="1640.9" cy="420.8" r="3.6"/><circle cx="1655.1" cy="420.8" r="3.6"/><circle cx="1669.2" cy="417.8" r="3.6"/><circle cx="1683.4" cy="413.6" r="3.6"/><circle cx="1697.6" cy="331" r="3.6"/><circle cx="1711.8" cy="276.5" r="3.6"/><circle cx="1726" cy="299.4" r="3.6"/><circle cx="1740.2" cy="360.3" r="3.6"/><circle cx="1754.3" cy="337.8" r="3.6"/><circle cx="1768.5" cy="399.9" r="3.6"/><circle cx="1782.7" cy="420.8" r="3.6"/><circle cx="1796.9" cy="420.8" r="3.6"/><circle cx="1811.1" cy="420.8" r="3.6"/><circle cx="1825.3" cy="420.8" r="3.6"/><circle cx="1839.5" cy="420.8" r="3.6"/><circle cx="1853.6" cy="340.5" r="3.6"/><circle cx="1867.8" cy="307.4" r="3.6"/><circle cx="1882" cy="415.5" r="3.6"/></g><rect x="1037.5" y="60" width="852" height="12" rx="6" fill="#7e8b93"/><rect x="1037.5" y="60" width="782" height="12" rx="6" fill="#dbdbdb"/><circle cx="1037.5" cy="65.7" r="7.6" fill="#dfdfdf"/><path d="M1036.5 63v5.5M1038.5 63v5.5" stroke="#f6f6f6" stroke-width=".8"/><circle cx="1819.4" cy="65.7" r="7.6" fill="#dfdfdf"/><path d="M1818.4 63v5.5M1820.4 63v5.5" stroke="#f6f6f6" stroke-width=".8"/><circle cx="1873" cy="95.3" r="13" fill="#6793dc"/><rect x="1868" y="94" width="9" height="1.6" fill="#dbe6f8"/><path d="M1035.6 900H1889.5" stroke="#0e2637" stroke-width="1"/><text x="1032" y="900.5" font-size="8.5" fill="#c3ced6" text-anchor="end">0</text><path d="M1035.6 855.2H1889.5" stroke="#0e2637" stroke-width="1"/><text x="1032" y="855.8" font-size="8.5" fill="#c3ced6" text-anchor="end">5</text><path d="M1035.6 810.5H1889.5" stroke="#0e2637" stroke-width="1"/><text x="1032" y="811" font-size="8.5" fill="#c3ced6" text-anchor="end">10</text><path d="M1035.6 765.8H1889.5" stroke="#0e2637" stroke-width="1"/><text x="1032" y="766.2" font-size="8.5" fill="#c3ced6" text-anchor="end">15</text><path d="M1035.6 721H1889.5" stroke="#0e2637" stroke-width="1"/><text x="1032" y="721.5" font-size="8.5" fill="#c3ced6" text-anchor="end">20</text><path d="M1035.6 676.2H1889.5" stroke="#0e2637" stroke-width="1"/><text x="1032" y="676.8" font-size="8.5" fill="#c3ced6" text-anchor="end">25</text><path d="M1035.6 631.5H1889.5" stroke="#0e2637" stroke-width="1"/><text x="1032" y="632" font-size="8.5" fill="#c3ced6" text-anchor="end">30</text><path d="M1035.6 586.8H1889.5" stroke="#0e2637" stroke-width="1"/><text x="1032" y="587.2" font-size="8.5" fill="#c3ced6" text-anchor="end">35</text><path d="M1039.6 586.8V904" stroke="#1a3344" stroke-width="1"/><path d="M1192.4 586.8V904" stroke="#1a3344" stroke-width="1"/><path d="M1361.2 586.8V904" stroke="#1a3344" stroke-width="1"/><path d="M1530.5 586.8V904" stroke="#1a3344" stroke-width="1"/><path d="M1698.7 586.8V904" stroke="#1a3344" stroke-width="1"/><path d="M1867.5 586.8V904" stroke="#1a3344" stroke-width="1"/><text x="1107.7" y="914.5" font-size="8.5" fill="#c3ced6" text-anchor="middle">Jan 2020</text><text x="1275.8" y="914.5" font-size="8.5" fill="#c3ced6" text-anchor="middle">Jan 2021</text><text x="1444.8" y="914.5" font-size="8.5" fill="#c3ced6" text-anchor="middle">Jan 2022</text><text x="1613.8" y="914.5" font-size="8.5" fill="#c3ced6" text-anchor="middle">Jan 2023</text><text x="1782.5" y="914.5" font-size="8.5" fill="#c3ced6" text-anchor="middle">Jan 2024</text><text transform="translate(1012 745) rotate(-90)" font-size="7.8" font-weight="bold" fill="#dfe6eb" text-anchor="middle" letter-spacing="-.2">Result (Units)</text><path d="M1039.9 900L1086 899.1L1123.1 889.5L1168.7 898L1208.6 898L1252.8 896.3L1292.6 899.5L1338 900L1376.7 900L1422.3 895.2L1460.8 900L1506.4 900L1548 605L1595.3 730.4L1631.2 793.1L1674.5 900L1712.7 859.7L1761.4 866L1800.4 821.2L1850.6 850.8L1889.3 874" fill="none" stroke="#c9d12c" stroke-width="1.1" stroke-linejoin="round"/><g fill="#e9ed3a"><circle cx="1039.9" cy="900" r="3.1"/><circle cx="1086" cy="899.1" r="3.1"/><circle cx="1123.1" cy="889.5" r="3.1"/><circle cx="1168.7" cy="898" r="3.1"/><circle cx="1208.6" cy="898" r="3.1"/><circle cx="1252.8" cy="896.3" r="3.1"/><circle cx="1292.6" cy="899.5" r="3.1"/><circle cx="1338" cy="900" r="3.1"/><circle cx="1376.7" cy="900" r="3.1"/><circle cx="1422.3" cy="895.2" r="3.1"/><circle cx="1460.8" cy="900" r="3.1"/><circle cx="1506.4" cy="900" r="3.1"/><circle cx="1548" cy="605" r="3.1"/><circle cx="1595.3" cy="730.4" r="3.1"/><circle cx="1631.2" cy="793.1" r="3.1"/><circle cx="1674.5" cy="900" r="3.1"/><circle cx="1712.7" cy="859.7" r="3.1"/><circle cx="1761.4" cy="866" r="3.1"/><circle cx="1800.4" cy="821.2" r="3.1"/><circle cx="1850.6" cy="850.8" r="3.1"/><circle cx="1889.3" cy="874" r="3.1"/></g><rect x="1039.6" y="567.5" width="850" height="12" rx="6" fill="#dbdbdb"/><circle cx="1039.6" cy="573.5" r="7.6" fill="#dfdfdf"/><path d="M1038.6 571v5.5M1040.6 571v5.5" stroke="#f6f6f6" stroke-width=".8"/><circle cx="1889.5" cy="573.5" r="7.6" fill="#dfdfdf"/><path d="M1888.5 571v5.5M1890.5 571v5.5" stroke="#f6f6f6" stroke-width=".8"/><path d="M1006.5 932v7M1004 936.6l2.5 2.6 2.5-2.6M1003 941.5h7" fill="none" stroke="#8fa0ab" stroke-width="1"/><circle cx="1884.5" cy="930.7" r="16" fill="#7aa6f4"/><path d="M1878.5 926.5a7.3 7.3 0 1 1-1.2 6.800" fill="none" stroke="#1c3350" stroke-width="1.3"/><path d="M1877.2 922.5v4.800h4.800" fill="none" stroke="#1c3350" stroke-width="1.3"/></svg><div class="abs" style="left:0;top:425px;width:7.5px;height:148px;background:#021a2a"></div><svg width="10" height="951"><path d="M1.2 496.5l2.800 2.800-2.800 2.800" fill="none" stroke="#9fb0bb" stroke-width="1.2"/></svg><div class="abs" style="left:928px;top:941.5px;width:42.5px;height:12px;background:#0b3152;border-radius:9px 9px 0 0"></div><svg width="1905" height="951"><path d="M945 948.500l4.2-3.600 4.2 3.600" fill="none" stroke="#c9d6de" stroke-width="1.2"/></svg></body></html>
